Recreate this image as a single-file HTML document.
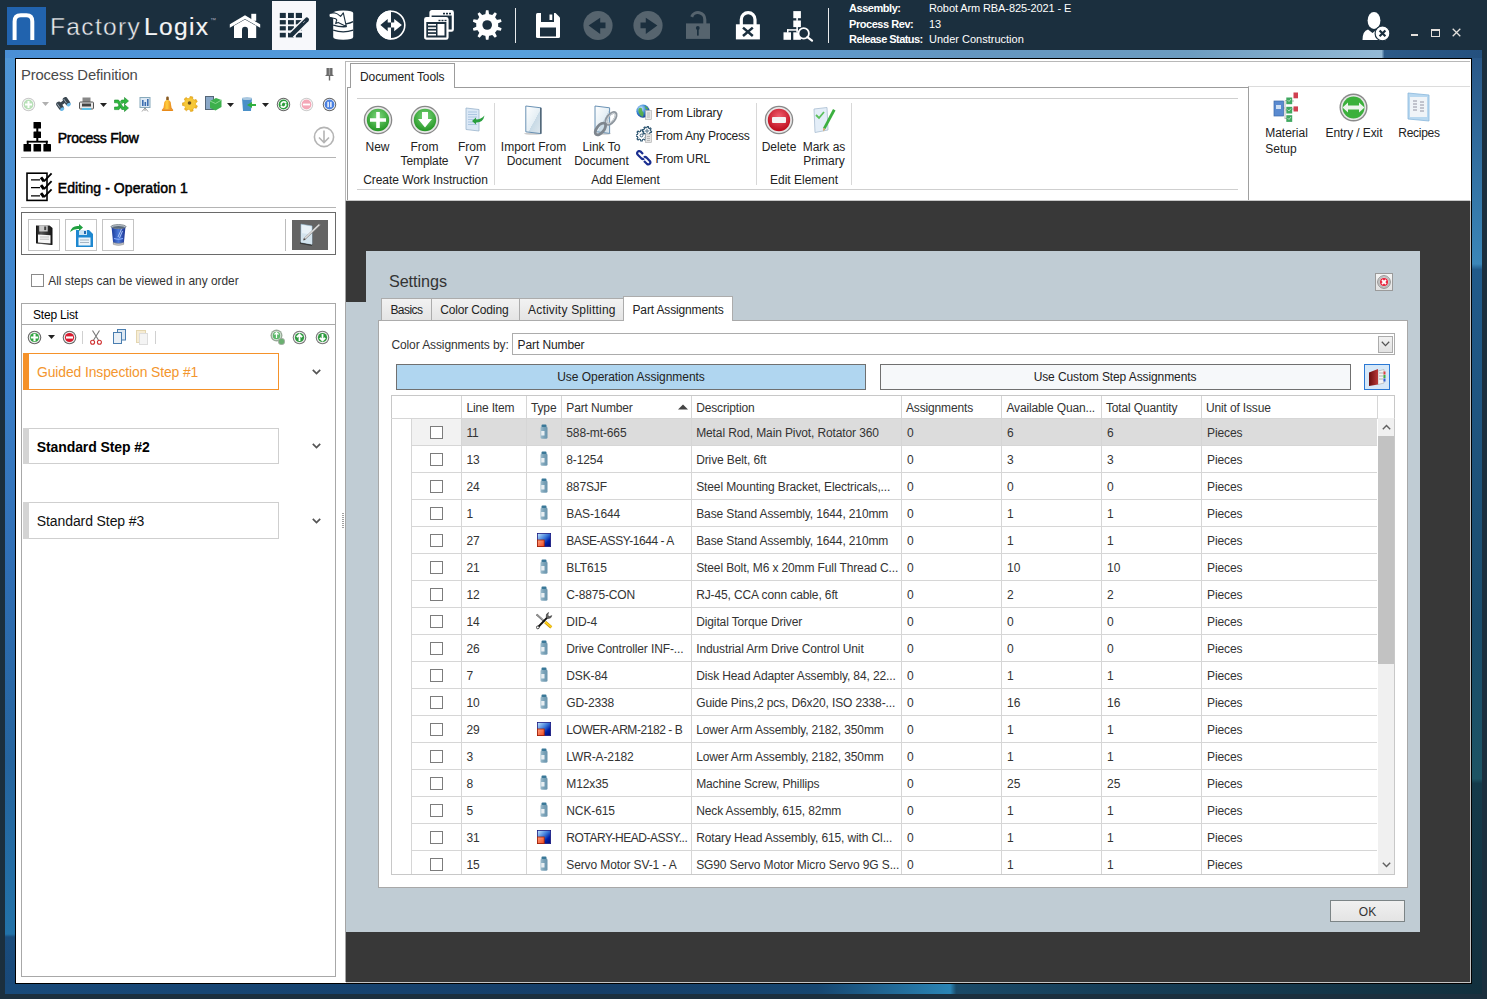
<!DOCTYPE html>
<html><head><meta charset="utf-8">
<style>
*{margin:0;padding:0;box-sizing:border-box}
html,body{width:1487px;height:999px;overflow:hidden;background:#1b2f3e;font-family:"Liberation Sans",sans-serif;font-size:12px;color:#222}
.a{position:absolute;display:block}
.t{position:absolute;white-space:nowrap;line-height:1}
</style></head><body>

<div class="a" style="left:5px;top:50px;width:1477px;height:8px;background:linear-gradient(90deg,#4a8fd6 0%,#58a0dc 35%,#5c9ad0 50%,#6496c0 65%,#6c9cc0 80%,#94bad6 93.2%,#2c5a88 93.4%,#24507e 100%)"></div>
<div class="a" style="left:5px;top:58px;width:10px;height:936px;background:linear-gradient(180deg,#4f96d6 0%,#3c82cc 30%,#2f6eb4 55%,#25649e 75%,#2272a8 93.6%,#1a4c7c 93.9%,#184878 100%)"></div>
<div class="a" style="left:1472px;top:58px;width:10px;height:936px;background:linear-gradient(180deg,#2a5888 0%,#3a86b8 22%,#205a8a 22.6%,#1f5580 38%,#1a4c6c 60%,#1c5464 77%,#143a4a 77.5%,#12303e 100%)"></div>
<div class="a" style="left:5px;top:984px;width:1477px;height:10px;background:linear-gradient(90deg,#184a7a 0%,#153e68 40%,#164670 55%,#2a84b4 64.0%,#1a4a68 64.4%,#163e58 75%,#12303e 100%)"></div>
<div class="a" style="left:15px;top:58px;width:1457px;height:926px;border:1px solid #000;background:#fff"></div>
<div class="a" style="left:7px;top:7px;width:39px;height:38px;background:#2163ae"></div>
<svg class="a" style="left:7px;top:7px" width="39" height="38" viewBox="0 0 39 38"><path d="M7.6 33 V14.5 Q7.6 8.3 13.8 8.3 H19.4 Q25.3 8.3 25.3 14.5 V33" fill="none" stroke="#fff" stroke-width="4"/></svg>
<div class="t" style="left:50px;top:15.00px;font-size:24.6px;font-weight:normal;color:#e8eaec;letter-spacing:1.3px;-webkit-text-stroke:0.4px #1b2f3e">Factory</div>
<div class="t" style="left:144px;top:15.00px;font-size:24.6px;font-weight:normal;color:#f4f5f6;letter-spacing:1.3px;-webkit-text-stroke:0.15px #f4f5f6">Logix</div>
<div class="t" style="left:210px;top:17.00px;font-size:6px;font-weight:normal;color:#aab;">&#8482;</div>
<div class="a" style="left:272px;top:1px;width:44px;height:49px;background:#f7f8fb"></div>
<svg class="a" style="left:229px;top:12px" width="32" height="28" viewBox="0 0 32 28"><rect x="22.3" y="1.8" width="4.9" height="7" fill="#fff"/><path d="M0.8 12.3 L16 3.3 L31.2 12.3 L31.2 15.8 L16 6.9 L0.8 15.8 Z" fill="#fff"/><path d="M5 13.8 L16 7.6 L27.2 13.8 V26 H19 V18 Q19 14.8 16 14.8 Q13 14.8 13 18 V26 H5 Z" fill="#fff"/></svg>
<svg class="a" style="left:279px;top:12px" width="31" height="27" viewBox="0 0 31 27"><g fill="#1b2f3e"><rect x="0.8" y="0.9" width="6" height="5.1"/><rect x="9" y="0.9" width="5.9" height="5.1"/><rect x="16.8" y="0.9" width="6.2" height="5.1"/><rect x="0.8" y="8.1" width="6" height="4.3"/><rect x="9" y="8.1" width="5.9" height="4.3"/><rect x="16.8" y="8.1" width="6.2" height="4.3"/><rect x="0.8" y="14.2" width="6" height="4.2"/><rect x="9" y="14.2" width="5.9" height="4.2"/><rect x="16.8" y="14.2" width="6.2" height="4.2"/><rect x="0.8" y="20.8" width="6" height="4.6"/><rect x="9" y="20.8" width="5.9" height="4.6"/><rect x="16.8" y="20.8" width="6.2" height="4.6"/></g><path d="M12.5 23 L27.5 8" stroke="#f7f8fb" stroke-width="7"/><path d="M13.2 22.3 L27.8 7.7" stroke="#1b2f3e" stroke-width="4.4" stroke-linecap="round"/><path d="M10.8 24.6 L11.6 20.5 L14.9 23.8 Z" fill="#1b2f3e"/><path d="M24.5 10.6 L25.6 9.5" stroke="#f7f8fb" stroke-width="0.9"/></svg>
<svg class="a" style="left:328px;top:10px" width="27" height="31" viewBox="0 0 27 31"><path d="M5.2 3 Q5.2 0.4 15.2 0.4 Q25.2 0.4 25.2 3 V27 Q25.2 29.8 15.2 29.8 Q5.2 29.8 5.2 27 Z" fill="#fff"/><path d="M5.2 20.2 Q15.2 23.6 25.2 20.2" stroke="#1b2f3e" stroke-width="1.3" fill="none"/><path d="M5.2 15.2 Q12 17.2 18.5 16.6 M18 13.8 Q22 13.2 25.2 11.6" stroke="#1b2f3e" stroke-width="1.3" fill="none"/><path d="M1.2 3.4 Q0.6 6.2 1.6 7.3 L7.6 8.8 Q9.5 9.8 8.3 11.2 L7.7 13.6 L10.2 12.4 L18.3 16.4 L15.3 2.9 L12.6 6.4 Q9.2 3.2 6.2 2.8 Z" fill="#fff" stroke="#1b2f3e" stroke-width="1.1" stroke-linejoin="round"/></svg>
<svg class="a" style="left:375px;top:9px" width="32" height="32" viewBox="0 0 32 32"><circle cx="16" cy="16.1" r="13.8" fill="none" stroke="#fff" stroke-width="1.6"/><path d="M16 1.6 A14.5 14.5 0 0 0 16 30.6 Z" fill="#fff"/><path d="M5.4 16.1 L12.7 9.9 V13.6 H16 V18.6 H12.7 V22.3 Z" fill="#1b2f3e"/><path d="M26.9 16.1 L19.2 9.9 V13.6 H16 V18.6 H19.2 V22.3 Z" fill="#fff"/></svg>
<svg class="a" style="left:424px;top:10px" width="30" height="30" viewBox="0 0 30 30"><rect x="6.5" y="1.2" width="22.3" height="19.5" rx="1.3" fill="#1b2f3e" stroke="#fff" stroke-width="2.2"/><rect x="1.2" y="8" width="22.3" height="20.7" rx="1.3" fill="#1b2f3e" stroke="#fff" stroke-width="2.2"/><rect x="6.5" y="2" width="21.5" height="3.5" fill="#fff"/><rect x="1.8" y="9" width="21.5" height="3" fill="#fff"/><g fill="#1b2f3e"><rect x="19" y="2.8" width="2" height="1.6"/><rect x="22" y="2.8" width="2" height="1.6"/><rect x="25" y="2.8" width="2" height="1.6"/><rect x="14.5" y="9.8" width="2" height="1.4"/><rect x="17.5" y="9.8" width="2" height="1.4"/><rect x="20.5" y="9.8" width="2" height="1.4"/></g><g fill="#fff"><rect x="4" y="14" width="8" height="1.6"/><rect x="4" y="17.3" width="8" height="1.6"/><rect x="4" y="20.6" width="8" height="1.6"/><rect x="4" y="23.9" width="8" height="1.6"/><rect x="13.5" y="14" width="7" height="11.5"/></g></svg>
<svg class="a" style="left:473px;top:10px" width="29" height="30" viewBox="0 0 29 30"><polygon points="12.21,5.20 12.94,0.25 15.46,0.25 16.19,5.20 18.35,5.90 21.85,2.33 23.88,3.81 21.57,8.24 22.91,10.08 27.84,9.25 28.61,11.64 24.13,13.86 24.13,16.14 28.61,18.36 27.84,20.75 22.91,19.92 21.57,21.76 23.88,26.19 21.85,27.67 18.35,24.10 16.19,24.80 15.46,29.75 12.94,29.75 12.21,24.80 10.05,24.10 6.55,27.67 4.52,26.19 6.83,21.76 5.49,19.92 0.56,20.75 -0.21,18.36 4.27,16.14 4.27,13.86 -0.21,11.64 0.56,9.25 5.49,10.08 6.83,8.24 4.52,3.81 6.55,2.33 10.05,5.90" fill="#fff"/><circle cx="14.2" cy="15" r="11" fill="#fff"/><circle cx="14.2" cy="15" r="4.8" fill="#1b2f3e"/></svg>
<div class="a" style="left:515px;top:8px;width:1px;height:35px;background:#e8eaec"></div>
<svg class="a" style="left:535px;top:12px" width="26" height="27" viewBox="0 0 26 27"><path d="M1 2.5 Q1 1 2.5 1 H20.5 L25 5.5 V24.5 Q25 26 23.5 26 H2.5 Q1 26 1 24.5 Z" fill="#fff"/><rect x="6" y="1" width="13" height="9" fill="#1b2f3e"/><rect x="14.5" y="2.5" width="2.8" height="5.5" fill="#fff"/><rect x="5" y="15.5" width="16" height="9" fill="#1b2f3e"/></svg>
<svg class="a" style="left:583px;top:10px" width="30" height="31" viewBox="0 0 30 31"><circle cx="15" cy="15.5" r="14.6" fill="#56646e"/><path d="M5.6 15.4 L17.2 7.7 V12.6 H22.5 V18.2 H17.2 V23.9 Z" fill="#1b2f3e"/></svg>
<svg class="a" style="left:633px;top:10px" width="30" height="31" viewBox="0 0 30 31"><circle cx="15" cy="15.5" r="14.6" fill="#56646e"/><path d="M24.4 15.4 L12.8 7.7 V12.6 H7.5 V18.2 H12.8 V23.9 Z" fill="#1b2f3e"/></svg>
<svg class="a" style="left:685px;top:10px" width="26" height="30" viewBox="0 0 26 30"><path d="M6.7 6.8 A6.8 6.8 0 0 1 19.8 9.4 V14" fill="none" stroke="#56646e" stroke-width="3.1"/><rect x="1" y="13.4" width="24" height="15.5" fill="#56646e"/><circle cx="12.8" cy="18" r="1.9" fill="#1b2f3e"/><rect x="12" y="18.5" width="1.7" height="7.1" fill="#1b2f3e"/></svg>
<svg class="a" style="left:735px;top:10px" width="26" height="31" viewBox="0 0 26 31"><path d="M6.3 15 V9.55 A6.85 6.85 0 0 1 20 9.55 V15" fill="none" stroke="#fff" stroke-width="3.2"/><rect x="0.9" y="14.3" width="24" height="15.1" fill="#fff"/><path d="M8 17.6 L17.8 26 M17.8 17.6 L8 26" stroke="#1b2f3e" stroke-width="2.5"/></svg>
<svg class="a" style="left:782px;top:10px" width="32" height="32" viewBox="0 0 32 32"><g fill="#fff"><rect x="11.3" y="1.1" width="7.6" height="7.1"/><rect x="14.3" y="8" width="1.6" height="2.8"/><rect x="11.3" y="10.5" width="7.6" height="6.6"/><rect x="14.3" y="17" width="1.6" height="5.5"/><rect x="5" y="19.2" width="10.9" height="1.5"/><rect x="5" y="19.2" width="1.5" height="3.5"/><rect x="1.5" y="22.3" width="7.5" height="7.5"/><rect x="11.3" y="22.3" width="7.6" height="7.5"/></g><circle cx="21.7" cy="23.4" r="5.2" fill="#1b2f3e" stroke="#fff" stroke-width="1.8"/><path d="M25.4 27.2 L30 30.6" stroke="#fff" stroke-width="2.2" stroke-linecap="round"/></svg>
<div class="a" style="left:828px;top:8px;width:1px;height:35px;background:#e8eaec"></div>
<div class="t" style="left:849px;top:3.00px;font-size:11px;font-weight:bold;color:#fff;letter-spacing:-0.45px">Assembly:</div>
<div class="t" style="left:849px;top:19.00px;font-size:11px;font-weight:bold;color:#fff;letter-spacing:-0.45px">Process Rev:</div>
<div class="t" style="left:849px;top:34.00px;font-size:11px;font-weight:bold;color:#fff;letter-spacing:-0.55px">Release Status:</div>
<div class="t" style="left:929px;top:3.00px;font-size:11px;font-weight:normal;color:#fff;letter-spacing:-0.1px">Robot Arm RBA-825-2021 - E</div>
<div class="t" style="left:929px;top:19.00px;font-size:11px;font-weight:normal;color:#fff;">13</div>
<div class="t" style="left:929px;top:34.00px;font-size:11px;font-weight:normal;color:#fff;">Under Construction</div>
<svg class="a" style="left:1362px;top:12px" width="29" height="30" viewBox="0 0 29 30"><ellipse cx="12" cy="8.6" rx="6.4" ry="8.5" fill="#fff"/><path d="M0.5 28 Q0.5 19 6 17.5 L10.5 21 L15 17.5 Q19 18.5 20 21 V28 Z" fill="#fff"/><circle cx="20.5" cy="21.4" r="7.4" fill="#fff" stroke="#1b2f3e" stroke-width="1.2"/><path d="M17.6 18.5 L23.4 24.3 M23.4 18.5 L17.6 24.3" stroke="#1b2f3e" stroke-width="2.2"/></svg>
<div class="a" style="left:1411px;top:34px;width:7px;height:2px;background:#e4e0dc"></div>
<div class="a" style="left:1431px;top:29px;width:9px;height:8px;border:1px solid #e4e0dc;border-top-width:2px"></div>
<svg class="a" style="left:1452px;top:28px" width="9" height="9" viewBox="0 0 9 9"><path d="M0.7 0.7 L8.3 8.3 M8.3 0.7 L0.7 8.3" stroke="#e4e0dc" stroke-width="1.3"/></svg>
<div class="t" style="left:21px;top:68.00px;font-size:14.8px;font-weight:normal;color:#4a4a4a;letter-spacing:-0.15px">Process Definition</div>
<svg class="a" style="left:324px;top:67px" width="11" height="14" viewBox="0 0 11 14"><path d="M2.5 1 H8.5 V7.5 L10 9 H1 L2.5 7.5 Z" fill="#6a6a6a"/><rect x="4.8" y="1" width="1.4" height="7" fill="#9a9a9a"/><rect x="4.8" y="9" width="1.4" height="4.5" fill="#6a6a6a"/></svg>
<svg class="a" style="left:21px;top:97px" width="15" height="15" viewBox="0 0 15 15"><circle cx="7.5" cy="7.5" r="6.7" fill="#c8c8c8"/><circle cx="7.5" cy="7.5" r="5.7" fill="#fff"/><circle cx="7.5" cy="7.5" r="4.9" fill="#b8e0b8"/><path d="M7.5 4 V11 M4 7.5 H11" stroke="#fff" stroke-width="2"/></svg>
<svg class="a" style="left:42px;top:102px" width="7" height="4" viewBox="0 0 7 4"><path d="M0 0 H7 L3.5 4 Z" fill="#b0b0b0"/></svg>
<svg class="a" style="left:56px;top:97px" width="15" height="14" viewBox="0 0 15 14"><g transform="rotate(-35 7.5 7)"><rect x="1" y="2" width="5" height="9" rx="2.2" fill="#3a4650"/><rect x="9" y="2" width="5" height="9" rx="2.2" fill="#3a4650"/><rect x="5" y="4" width="5" height="3" fill="#3a4650"/><ellipse cx="3.5" cy="10.5" rx="2.2" ry="1.6" fill="#6ab8e8"/><ellipse cx="11.5" cy="10.5" rx="2.2" ry="1.6" fill="#6ab8e8"/><path d="M2.5 3 V8 M10.5 3 V8" stroke="#a8b8c4" stroke-width="0.8"/></g></svg>
<svg class="a" style="left:79px;top:97px" width="15" height="14" viewBox="0 0 15 14"><rect x="3.5" y="0.5" width="8" height="5" fill="#888"/><rect x="0.5" y="5" width="14" height="7" rx="1" fill="#e8e8e8" stroke="#555"/><rect x="3" y="6.5" width="9" height="3" fill="#444"/><rect x="3" y="11" width="9" height="2" fill="#5ac0e8"/></svg>
<svg class="a" style="left:100px;top:103px" width="7" height="4" viewBox="0 0 7 4"><path d="M0 0 H7 L3.5 4 Z" fill="#222"/></svg>
<svg class="a" style="left:114px;top:97px" width="15" height="15" viewBox="0 0 15 15"><path d="M0.5 3 H4.5 L9 10 H10.5 V7.5 L14.5 11 L10.5 14.5 V12.5 H7.8 L3.5 5.8 H0.5 Z" fill="#2eb83e" stroke="#1a8a2a" stroke-width="0.6"/><path d="M0.5 10 H3.6 L5 8.2 L6.6 10.4 L5 12.6 H0.5 Z M10.5 0.5 L14.5 4 L10.5 7.5 V5.7 H8.8 L8 6.8 L6.4 4.6 L7.6 3 H10.5 Z" fill="#2eb83e" stroke="#1a8a2a" stroke-width="0.6"/></svg>
<svg class="a" style="left:139px;top:97px" width="12" height="15" viewBox="0 0 12 15"><rect x="1" y="0.5" width="10" height="10" fill="#dce8f4" stroke="#8ab"/><rect x="3" y="3" width="1.6" height="6" fill="#3c6eb0"/><rect x="5.5" y="5" width="1.6" height="4" fill="#3c6eb0"/><rect x="8" y="2" width="1.6" height="7" fill="#3c6eb0"/><path d="M6 10.5 V14 M6 11 L3 14.5 M6 11 L9 14.5" stroke="#888" stroke-width="0.8"/></svg>
<svg class="a" style="left:161px;top:96px" width="13" height="16" viewBox="0 0 13 16"><defs><linearGradient id="bellg" x1="0" x2="1"><stop offset="0" stop-color="#f08010"/><stop offset="0.45" stop-color="#ffd040"/><stop offset="1" stop-color="#e07010"/></linearGradient></defs><rect x="5.2" y="0.5" width="2.6" height="4" rx="1.2" fill="#8a5a20"/><path d="M6.5 4 Q3 4 3 8.5 Q3 12 1 13.5 H12 Q10 12 10 8.5 Q10 4 6.5 4 Z" fill="url(#bellg)"/><rect x="0.8" y="13.2" width="11.4" height="1.8" rx="0.8" fill="#e88a18"/></svg>
<svg class="a" style="left:182px;top:96px" width="16" height="16" viewBox="0 0 16 16"><polygon points="7.44,2.43 8.23,0.40 10.75,0.91 10.68,3.09 12.01,4.09 14.08,3.44 15.25,5.73 13.52,7.03 13.56,8.69 15.36,9.91 14.30,12.26 12.19,11.71 10.92,12.78 11.09,14.94 8.60,15.58 7.71,13.59 6.09,13.26 4.50,14.75 2.45,13.19 3.45,11.26 2.69,9.78 0.54,9.47 0.48,6.90 2.61,6.48 3.30,4.96 2.20,3.09 4.17,1.43 5.83,2.84" fill="#f2b828" stroke="#d89a10" stroke-width="0.6" stroke-linejoin="round"/><circle cx="8" cy="8" r="5.8" fill="#f6c83a"/><circle cx="7.5" cy="7" r="1.8" fill="#6a5020"/></svg>
<svg class="a" style="left:205px;top:96px" width="17" height="16" viewBox="0 0 17 16"><rect x="0.5" y="0.5" width="8" height="13" fill="#8aa8c8" stroke="#567"/><path d="M5 5 L11 2 L16.5 4 V11 L10.5 14.5 L5 12 Z" fill="#3cb04c"/><path d="M5 5 L10.5 7.5 L16.5 4" fill="none" stroke="#9be0a0" stroke-width="0.8"/></svg>
<svg class="a" style="left:227px;top:103px" width="7" height="4" viewBox="0 0 7 4"><path d="M0 0 H7 L3.5 4 Z" fill="#222"/></svg>
<svg class="a" style="left:241px;top:96px" width="16" height="16" viewBox="0 0 16 16"><path d="M1 2 H11 L10 15 H2 Z" fill="#4a90c8"/><ellipse cx="6" cy="2.5" rx="5" ry="1.5" fill="#aac8e0"/><path d="M6 9 L11 6 V8 H15 V10 H11 V12 Z" fill="#30b040"/></svg>
<svg class="a" style="left:262px;top:103px" width="7" height="4" viewBox="0 0 7 4"><path d="M0 0 H7 L3.5 4 Z" fill="#222"/></svg>
<svg class="a" style="left:276px;top:97px" width="15" height="15" viewBox="0 0 15 15"><circle cx="7.5" cy="7.5" r="6.7" fill="#666"/><circle cx="7.5" cy="7.5" r="5.7" fill="#fff"/><circle cx="7.5" cy="7.5" r="4.9" fill="#2e9e3e"/><path d="M5.2 8.2 A2.6 2.6 0 0 1 9.5 5.6" stroke="#fff" stroke-width="1.5" fill="none"/><path d="M9.8 6.8 A2.6 2.6 0 0 1 5.5 9.4" stroke="#fff" stroke-width="1.5" fill="none"/><path d="M8.5 4 L10.8 5.2 L9 7 Z M6.5 11 L4.2 9.8 L6 8 Z" fill="#fff"/></svg>
<svg class="a" style="left:299px;top:97px" width="15" height="15" viewBox="0 0 15 15"><circle cx="7.5" cy="7.5" r="6.7" fill="#ccc"/><circle cx="7.5" cy="7.5" r="5.7" fill="#fff"/><circle cx="7.5" cy="7.5" r="4.9" fill="#f4a8b8"/><rect x="4" y="6.6" width="7" height="1.8" fill="#fff"/></svg>
<svg class="a" style="left:322px;top:97px" width="15" height="15" viewBox="0 0 15 15"><circle cx="7.5" cy="7.5" r="6.7" fill="#666"/><circle cx="7.5" cy="7.5" r="5.7" fill="#fff"/><circle cx="7.5" cy="7.5" r="4.9" fill="#4a80e0"/><rect x="5.4" y="4.8" width="1.4" height="5.4" fill="#fff"/><rect x="8.2" y="4.8" width="1.4" height="5.4" fill="#fff"/></svg>
<svg class="a" style="left:23px;top:122px" width="28" height="30" viewBox="0 0 28 30"><g fill="#000"><rect x="10.5" y="0" width="7.5" height="6.5" rx="0.6"/><rect x="10.5" y="9.5" width="7.5" height="6.5" rx="0.6"/><rect x="13.3" y="6" width="2" height="4"/><rect x="13.3" y="15.5" width="2" height="4"/><rect x="3.8" y="18.8" width="21" height="1.8"/><rect x="3.8" y="18.8" width="1.8" height="4"/><rect x="22.8" y="18.8" width="1.8" height="4"/><rect x="0.5" y="22" width="7.6" height="7.5" rx="0.6"/><rect x="10.5" y="22" width="7.6" height="7.5" rx="0.6"/><rect x="20.4" y="22" width="7.6" height="7.5" rx="0.6"/></g></svg>
<div class="t" style="left:57.7px;top:131.00px;font-size:14px;font-weight:normal;color:#000;letter-spacing:-0.25px;-webkit-text-stroke:0.5px #000">Process Flow</div>
<svg class="a" style="left:313px;top:126px" width="22" height="22" viewBox="0 0 22 22"><circle cx="11" cy="11" r="9.6" fill="none" stroke="#b4b4b4" stroke-width="1.6"/><path d="M11 4.5 V16.5 M6 11.5 L11 16.5 L16 11.5" fill="none" stroke="#b4b4b4" stroke-width="1.6"/></svg>
<div class="a" style="left:21px;top:157px;width:315px;height:1px;background:#b4b4b4"></div>
<svg class="a" style="left:25px;top:171px" width="28" height="31" viewBox="0 0 28 31"><rect x="2" y="2.2" width="20" height="27.2" fill="none" stroke="#000" stroke-width="1.6"/><g stroke="#000" stroke-width="1.3" fill="none"><path d="M6 8.8 H15 M6 16.6 H15 M6 24.8 H15"/></g><g fill="none" stroke="#000" stroke-linejoin="miter"><path d="M16 6.3 L19 10.3" stroke-width="3"/><path d="M19 10.3 L26.6 2.4" stroke-width="1.8"/><path d="M16 14.1 L19 18.1" stroke-width="3"/><path d="M19 18.1 L26.6 10.2" stroke-width="1.8"/><path d="M16 22.2 L19 26.2" stroke-width="3"/><path d="M19 26.2 L26.6 18.3" stroke-width="1.8"/></g></svg>
<div class="t" style="left:57.8px;top:181.00px;font-size:14px;font-weight:normal;color:#000;letter-spacing:0.08px;-webkit-text-stroke:0.5px #000">Editing - Operation 1</div>
<div class="a" style="left:21px;top:207px;width:315px;height:1px;background:#b4b4b4"></div>
<div class="a" style="left:21px;top:212px;width:315px;height:43px;border:1px solid #6a6a6a;background:#fff"></div>
<div class="a" style="left:28px;top:219px;width:32px;height:32px;border:1px solid #c4c4c4"></div>
<div class="a" style="left:65px;top:219px;width:32px;height:32px;border:1px solid #c4c4c4"></div>
<div class="a" style="left:102px;top:219px;width:32px;height:32px;border:1px solid #c4c4c4"></div>
<svg class="a" style="left:35px;top:224px" width="19" height="22" viewBox="0 0 19 22"><defs><linearGradient id="flb" x1="0" x2="1"><stop offset="0" stop-color="#111"/><stop offset="0.3" stop-color="#555"/><stop offset="1" stop-color="#111"/></linearGradient></defs><path d="M1 1.5 H14.5 L17.5 4 V20.5 Q17.5 21.3 16.5 21 L1.5 19.5 Q1 19.4 1 18.8 Z" fill="url(#flb)"/><rect x="4.2" y="1.5" width="8.5" height="6" fill="#c8c8c8"/><rect x="9.2" y="2.5" width="2" height="3.6" fill="#444"/><path d="M3 10.5 L15.5 11.2 V19.5 L3 18.5 Z" fill="#f6f6f6"/><path d="M5 13 H14 M5 15.2 H14" stroke="#999" stroke-width="0.6"/></svg>
<svg class="a" style="left:69px;top:224px" width="25" height="24" viewBox="0 0 25 24"><path d="M7 6 H20 L24 10 V23 H7 Z" fill="#1e88d0"/><rect x="10" y="6" width="8" height="5" fill="#cce4f4"/><rect x="15" y="7" width="2" height="3" fill="#1e68b0"/><rect x="9.5" y="13.5" width="12" height="8" fill="#eaf4fb"/><path d="M11 16 H20 M11 18.5 H20" stroke="#89a" stroke-width="0.7"/><path d="M1 8 Q3 1 10 2 V0 L14 3.5 L10 7 V5 Q5 4.5 1 8 Z" fill="#20a040"/></svg>
<svg class="a" style="left:110px;top:224px" width="17" height="22" viewBox="0 0 17 22"><defs><linearGradient id="binb" x1="0" x2="1"><stop offset="0" stop-color="#1a3a9a"/><stop offset="0.5" stop-color="#4a78d8"/><stop offset="1" stop-color="#1a3090"/></linearGradient></defs><path d="M1.5 2.5 L15.5 2.5 L13.8 19.5 Q8.5 21.5 3.2 19.5 Z" fill="url(#binb)"/><ellipse cx="8.5" cy="2.6" rx="7.5" ry="2" fill="#b8c0c8" stroke="#707880" stroke-width="0.8"/><ellipse cx="8.5" cy="3.2" rx="6" ry="1.1" fill="#5a6a7a"/><path d="M8 13 L11.5 5 M9.5 14 L12.5 7" stroke="#c8dcff" stroke-width="0.8"/><path d="M4 14.5 Q8.5 16 13 14.5" stroke="#8ab0ff" stroke-width="1.2" fill="none"/><path d="M3.2 18.5 Q8.5 20.5 13.8 18.5 L13.6 20.5 Q8.5 22.3 3.4 20.5 Z" fill="#c8c8c8" stroke="#888" stroke-width="0.5"/></svg>
<div class="a" style="left:285px;top:219px;width:1px;height:32px;background:#bcbcbc"></div>
<div class="a" style="left:292px;top:220px;width:36px;height:30px;background:#646464"></div>
<svg class="a" style="left:298px;top:222px" width="26" height="26" viewBox="0 0 26 26"><path d="M2 21 L14 23.2" stroke="#3a3a3a" stroke-width="1.6"/><path d="M3 2.2 L14 4 V22.2 L3 20.2 Z" fill="#e8f2f8" stroke="#9ec4dc" stroke-width="0.6"/><path d="M3 11 L14 12.5 V22.2 L3 20.2 Z" fill="#d4e4ee"/><path d="M6.2 17.2 L21.4 2.8" stroke="#888" stroke-width="2.2" stroke-linecap="round"/><path d="M6.2 17 L21.2 2.8" stroke="#e0e0e0" stroke-width="1.2"/><path d="M5.2 18.4 L6.8 16 L7.5 17.3 Z" fill="#333"/></svg>
<div class="a" style="left:31px;top:274px;width:13px;height:13px;border:1px solid #8a8a8a;background:#fff"></div>
<div class="t" style="left:48.3px;top:276.00px;font-size:11.9px;font-weight:normal;color:#333;">All steps can be viewed in any order</div>
<div class="a" style="left:21px;top:303px;width:315px;height:674px;border:1px solid #a8a8a8;background:#fff"></div>
<div class="a" style="left:22px;top:324px;width:313px;height:1px;background:#a8a8a8"></div>
<div class="t" style="left:33px;top:309.00px;font-size:12px;font-weight:normal;color:#000;letter-spacing:-0.2px">Step List</div>
<svg class="a" style="left:27px;top:330px" width="15" height="15" viewBox="0 0 15 15"><circle cx="7.5" cy="7.5" r="6.8" fill="#666"/><circle cx="7.5" cy="7.5" r="5.7" fill="#eee"/><circle cx="7.5" cy="7.5" r="4.6" fill="#2fa43f"/><path d="M7.5 3.8 V11.2 M3.8 7.5 H11.2" stroke="#fff" stroke-width="2.2"/></svg>
<svg class="a" style="left:48px;top:335px" width="7" height="4" viewBox="0 0 7 4"><path d="M0 0 H7 L3.5 4 Z" fill="#222"/></svg>
<svg class="a" style="left:62px;top:330px" width="15" height="15" viewBox="0 0 15 15"><circle cx="7.5" cy="7.5" r="6.8" fill="#666"/><circle cx="7.5" cy="7.5" r="5.7" fill="#eee"/><circle cx="7.5" cy="7.5" r="4.6" fill="#d81a2e"/><rect x="4" y="6.4" width="7" height="2.2" fill="#fff"/></svg>
<div class="a" style="left:82px;top:331px;width:1px;height:13px;background:#d0d0d0"></div>
<svg class="a" style="left:90px;top:330px" width="12" height="15" viewBox="0 0 12 15"><path d="M2.5 0.5 L9 11 M9.5 0.5 L3 11" stroke="#777" stroke-width="1.1"/><circle cx="2.6" cy="12.3" r="2" fill="none" stroke="#d03030" stroke-width="1.1"/><circle cx="9.4" cy="12.3" r="2" fill="none" stroke="#d03030" stroke-width="1.1"/></svg>
<svg class="a" style="left:113px;top:329px" width="13" height="15" viewBox="0 0 13 15"><rect x="4.5" y="0.5" width="8" height="10.5" fill="#dde8f2" stroke="#4a7eb0"/><rect x="0.5" y="3.5" width="8" height="11" fill="#eaf0f6" stroke="#4a7eb0"/></svg>
<svg class="a" style="left:136px;top:329px" width="12" height="16" viewBox="0 0 12 16"><rect x="0.5" y="1.5" width="9" height="12" fill="#f6ecd4" stroke="#e4d6b0"/><rect x="3.5" y="4.5" width="8" height="11" fill="#f4f4f4" stroke="#ddd"/></svg>
<div class="a" style="left:155px;top:331px;width:1px;height:13px;background:#d0d0d0"></div>
<svg class="a" style="left:270px;top:329px" width="15" height="16" viewBox="0 0 15 16"><circle cx="6.5" cy="6.5" r="6" fill="#9a9"/><circle cx="6.5" cy="6.5" r="4.6" fill="#e6eee6"/><circle cx="6.5" cy="6.5" r="3.8" fill="#5cb86a"/><path d="M6.5 3.5 V9 M4.5 5.5 L6.5 3.5 L8.5 5.5" stroke="#fff" stroke-width="1.2" fill="none"/><circle cx="11.5" cy="12.5" r="3.2" fill="#6ab070" stroke="#aaa" stroke-width="0.8"/></svg>
<svg class="a" style="left:292px;top:330px" width="15" height="15" viewBox="0 0 15 15"><circle cx="7.5" cy="7.5" r="6.8" fill="#777"/><circle cx="7.5" cy="7.5" r="5.7" fill="#eee"/><circle cx="7.5" cy="7.5" r="4.6" fill="#2e9a3e"/><path d="M7.5 11 V4.5 M4.8 7.2 L7.5 4.5 L10.2 7.2" stroke="#fff" stroke-width="1.8" fill="none"/></svg>
<svg class="a" style="left:315px;top:330px" width="15" height="15" viewBox="0 0 15 15"><circle cx="7.5" cy="7.5" r="6.8" fill="#777"/><circle cx="7.5" cy="7.5" r="5.7" fill="#eee"/><circle cx="7.5" cy="7.5" r="4.6" fill="#2e9a3e"/><path d="M7.5 4 V10.5 M4.8 7.8 L7.5 10.5 L10.2 7.8" stroke="#fff" stroke-width="1.8" fill="none"/></svg>
<div class="a" style="left:23px;top:353px;width:256px;height:37px;border:1px solid #f5922a;background:#fff"></div>
<div class="a" style="left:23px;top:353px;width:6px;height:37px;background:#f5922a"></div>
<div class="t" style="left:37px;top:366.00px;font-size:13.9px;font-weight:normal;color:#f3962e;letter-spacing:-0.1px">Guided Inspection Step #1</div>
<svg class="a" style="left:312px;top:369px" width="9" height="6" viewBox="0 0 9 6"><path d="M0.8 0.8 L4.5 4.6 L8.2 0.8" fill="none" stroke="#555" stroke-width="1.7"/></svg>
<div class="a" style="left:23px;top:428px;width:256px;height:36px;border:1px solid #cfcfcf;background:#fff"></div>
<div class="a" style="left:23px;top:428px;width:6px;height:36px;background:#d4d4d4"></div>
<div class="t" style="left:36.8px;top:440.00px;font-size:14px;font-weight:bold;color:#000;letter-spacing:-0.1px">Standard Step #2</div>
<svg class="a" style="left:312px;top:443px" width="9" height="6" viewBox="0 0 9 6"><path d="M0.8 0.8 L4.5 4.6 L8.2 0.8" fill="none" stroke="#555" stroke-width="1.7"/></svg>
<div class="a" style="left:23px;top:502px;width:256px;height:37px;border:1px solid #cfcfcf;background:#fff"></div>
<div class="a" style="left:23px;top:502px;width:6px;height:37px;background:#d4d4d4"></div>
<div class="t" style="left:36.8px;top:514.00px;font-size:14px;font-weight:normal;color:#111;letter-spacing:-0.1px">Standard Step #3</div>
<svg class="a" style="left:312px;top:518px" width="9" height="6" viewBox="0 0 9 6"><path d="M0.8 0.8 L4.5 4.6 L8.2 0.8" fill="none" stroke="#555" stroke-width="1.7"/></svg>
<div class="a" style="left:345px;top:61px;width:1px;height:921px;background:#a4a4a4"></div>
<div class="a" style="left:342px;top:513px;width:2px;height:1px;background:#a0a0a0"></div>
<div class="a" style="left:342px;top:515px;width:2px;height:1px;background:#a0a0a0"></div>
<div class="a" style="left:342px;top:517px;width:2px;height:1px;background:#a0a0a0"></div>
<div class="a" style="left:342px;top:519px;width:2px;height:1px;background:#a0a0a0"></div>
<div class="a" style="left:342px;top:521px;width:2px;height:1px;background:#a0a0a0"></div>
<div class="a" style="left:342px;top:523px;width:2px;height:1px;background:#a0a0a0"></div>
<div class="a" style="left:342px;top:525px;width:2px;height:1px;background:#a0a0a0"></div>
<div class="a" style="left:342px;top:527px;width:2px;height:1px;background:#a0a0a0"></div>
<div class="a" style="left:346px;top:59px;width:1124px;height:142px;background:#fff"></div>
<div class="a" style="left:345px;top:61px;width:1125px;height:1px;background:#b8b8b8"></div>
<div class="a" style="left:345px;top:61px;width:1px;height:140px;background:#b8b8b8"></div>
<div class="a" style="left:347px;top:87px;width:1px;height:114px;background:#9c9c9c"></div>
<div class="a" style="left:350px;top:63px;width:105px;height:25px;border:1px solid #9c9c9c;border-bottom:none;background:#fff"></div>
<div class="a" style="left:347px;top:87px;width:3px;height:1px;background:#9c9c9c"></div>
<div class="a" style="left:455px;top:87px;width:794px;height:1px;background:#9c9c9c"></div>
<div class="t" style="left:360px;top:71.00px;font-size:12px;font-weight:normal;color:#222;letter-spacing:-0.1px">Document Tools</div>
<div class="a" style="left:357px;top:98px;width:881px;height:1px;background:#cfcfcf"></div>
<div class="a" style="left:357px;top:189px;width:881px;height:1px;background:#cfcfcf"></div>
<div class="a" style="left:494px;top:103px;width:1px;height:82px;background:#d8d8d8"></div>
<div class="a" style="left:756px;top:103px;width:1px;height:82px;background:#d8d8d8"></div>
<div class="a" style="left:851px;top:103px;width:1px;height:82px;background:#d8d8d8"></div>
<svg class="a" style="left:363px;top:105px" width="30" height="30" viewBox="0 0 30 30"><defs><radialGradient id="g363" cx="0.5" cy="0.35" r="0.6"><stop offset="0" stop-color="#7ed87e"/><stop offset="1" stop-color="#2a9a2a"/></radialGradient></defs><circle cx="15" cy="15" r="14.3" fill="#888"/><circle cx="15" cy="15" r="13" fill="#e8e8e8"/><circle cx="15" cy="15" r="11.2" fill="url(#g363)"/><path d="M15 7 V23 M7 15 H23" stroke="#fff" stroke-width="3.6"/></svg>
<svg class="a" style="left:410px;top:105px" width="30" height="30" viewBox="0 0 30 30"><defs><radialGradient id="g410" cx="0.5" cy="0.35" r="0.6"><stop offset="0" stop-color="#7ed87e"/><stop offset="1" stop-color="#2a9a2a"/></radialGradient></defs><circle cx="15" cy="15" r="14.3" fill="#888"/><circle cx="15" cy="15" r="13" fill="#e8e8e8"/><circle cx="15" cy="15" r="11.2" fill="url(#g410)"/><path d="M12 7 H18 V14 H22 L15 22.5 L8 14 H12 Z" fill="#fff"/></svg>
<svg class="a" style="left:464px;top:107px" width="21" height="25" viewBox="0 0 21 25"><path d="M2 1 L15 2.5 V24 L2 22.5 Z" fill="#dbe8f6" stroke="#9bb4cc" stroke-width="0.8"/><path d="M4 5 H13 M4 7.5 H13 M4 10 H13 M4 12.5 H13 M4 15 H13 M4 17.5 H13" stroke="#9ab8d8" stroke-width="0.7"/><path d="M8 14 L12 10.5 V12.5 Q17 12.5 20.5 8.5 Q19 16 12 15.5 V17.5 Z" fill="#2aa040"/></svg>
<div class="t" style="left:227.5px;width:300px;text-align:center;top:141.00px;font-size:12px;font-weight:normal;color:#222;">New</div>
<div class="t" style="left:274.5px;width:300px;text-align:center;top:141.00px;font-size:12px;font-weight:normal;color:#222;">From</div>
<div class="t" style="left:274.5px;width:300px;text-align:center;top:155.00px;font-size:12px;font-weight:normal;color:#222;letter-spacing:-0.1px">Template</div>
<div class="t" style="left:322px;width:300px;text-align:center;top:141.00px;font-size:12px;font-weight:normal;color:#222;">From</div>
<div class="t" style="left:322px;width:300px;text-align:center;top:155.00px;font-size:12px;font-weight:normal;color:#222;">V7</div>
<div class="t" style="left:275.5px;width:300px;text-align:center;top:174.00px;font-size:12px;font-weight:normal;color:#222;letter-spacing:-0.05px">Create Work Instruction</div>
<svg class="a" style="left:523px;top:105px" width="22" height="31" viewBox="0 0 22 31"><defs><linearGradient id="docg" x1="0" y1="0" x2="1" y2="1"><stop offset="0" stop-color="#ffffff"/><stop offset="0.55" stop-color="#e4eef4"/><stop offset="0.56" stop-color="#c8dae6"/><stop offset="1" stop-color="#dfe8ee"/></linearGradient></defs><ellipse cx="10" cy="28.6" rx="9" ry="1.2" fill="#999" opacity="0.5"/><path d="M2.8 1 L17.9 2.8 V28.6 L2.8 26.8 Z" fill="url(#docg)" stroke="#5a86ac" stroke-width="0.9"/><path d="M17.9 2.8 V28.6" stroke="#2a3a48" stroke-width="1"/></svg>
<svg class="a" style="left:593px;top:105px" width="26" height="32" viewBox="0 0 26 32"><ellipse cx="10" cy="28.6" rx="8" ry="1.2" fill="#999" opacity="0.5"/><path d="M2 1 L16.6 2.8 V28.4 L2 26.6 Z" fill="url(#docg)" stroke="#5a86ac" stroke-width="0.9"/><g fill="none" stroke-width="2.8"><ellipse cx="18" cy="13.4" rx="7" ry="3.6" transform="rotate(-52 18 13.4)" stroke="#8e969e"/><ellipse cx="7.4" cy="24" rx="7" ry="3.6" transform="rotate(-52 7.4 24)" stroke="#7e868e"/></g><g fill="none" stroke-width="0.9" stroke="#d8dde2"><ellipse cx="18" cy="13.4" rx="6.2" ry="2.8" transform="rotate(-52 18 13.4)"/></g></svg>
<div class="t" style="left:383.5px;width:300px;text-align:center;top:141.00px;font-size:12px;font-weight:normal;color:#222;">Import From</div>
<div class="t" style="left:384px;width:300px;text-align:center;top:155.00px;font-size:12px;font-weight:normal;color:#222;">Document</div>
<div class="t" style="left:451.5px;width:300px;text-align:center;top:141.00px;font-size:12px;font-weight:normal;color:#222;">Link To</div>
<div class="t" style="left:451.5px;width:300px;text-align:center;top:155.00px;font-size:12px;font-weight:normal;color:#222;">Document</div>
<svg class="a" style="left:636px;top:104px" width="16" height="16" viewBox="0 0 16 16"><defs><radialGradient id="glb" cx="0.35" cy="0.3" r="0.75"><stop offset="0" stop-color="#cfe8ff"/><stop offset="0.5" stop-color="#3a8ad8"/><stop offset="1" stop-color="#1a3a90"/></radialGradient></defs><circle cx="7" cy="7.2" r="6.6" fill="url(#glb)"/><path d="M2.5 5 Q4 3 6 4.5 Q5.5 7 7.5 8.5 Q8 11 6.5 13 Q3 11 2.5 8 Z M8.5 1.5 Q11 2.5 12.5 5 L10 5.5 Z" fill="#5ab040" opacity="0.9"/><rect x="9.6" y="6.5" width="5.8" height="9" fill="#e8e8e8" stroke="#aaa" stroke-width="0.6"/><path d="M11 9 H14 M11 11 H14 M11 13 H14" stroke="#999" stroke-width="0.6"/></svg>
<div class="t" style="left:655.5px;top:107.00px;font-size:12px;font-weight:normal;color:#222;letter-spacing:-0.1px">From Library</div>
<svg class="a" style="left:636px;top:126px" width="17" height="17" viewBox="0 0 17 17"><polygon points="4.50,5.42 4.77,3.95 6.23,3.95 6.50,5.42 7.68,5.91 8.91,5.06 9.94,6.09 9.09,7.32 9.58,8.50 11.05,8.77 11.05,10.23 9.58,10.50 9.09,11.68 9.94,12.91 8.91,13.94 7.68,13.09 6.50,13.58 6.23,15.05 4.77,15.05 4.50,13.58 3.32,13.09 2.09,13.94 1.06,12.91 1.91,11.68 1.42,10.50 -0.05,10.23 -0.05,8.77 1.42,8.50 1.91,7.32 1.06,6.09 2.09,5.06 3.32,5.91" fill="#fff" stroke="#2c5470" stroke-width="1.1"/><circle cx="5.5" cy="9.5" r="1.4" fill="none" stroke="#2c5470" stroke-width="0.9"/><polygon points="10.86,1.60 11.32,0.41 12.49,0.65 12.45,1.92 13.31,2.50 14.47,1.98 15.13,2.98 14.20,3.85 14.40,4.86 15.59,5.32 15.35,6.49 14.08,6.45 13.50,7.31 14.02,8.47 13.02,9.13 12.15,8.20 11.14,8.40 10.68,9.59 9.51,9.35 9.55,8.08 8.69,7.50 7.53,8.02 6.87,7.02 7.80,6.15 7.60,5.14 6.41,4.68 6.65,3.51 7.92,3.55 8.50,2.69 7.98,1.53 8.98,0.87 9.85,1.80" fill="#fff" stroke="#2c5470" stroke-width="1.1"/><circle cx="11" cy="5" r="1.2" fill="none" stroke="#2c5470" stroke-width="0.9"/><rect x="9.5" y="8" width="6" height="8.5" fill="#e4e4e4" stroke="#aaa" stroke-width="0.6"/><path d="M11 10.5 H14 M11 12.5 H14 M11 14.5 H14" stroke="#999" stroke-width="0.6"/></svg>
<div class="t" style="left:655.5px;top:130.00px;font-size:12px;font-weight:normal;color:#222;letter-spacing:-0.25px">From Any Process</div>
<svg class="a" style="left:636px;top:150px" width="16" height="16" viewBox="0 0 16 16"><g fill="none" stroke="#1a2e90" stroke-width="2.2"><path d="M7 4 L4.5 1.5 Q2.5 0.5 1.5 2 Q0.5 3.5 2 5 L5.5 8.5 Q7 9.5 8 8.5"/><path d="M8 11 L11 14 Q12.5 15 13.8 13.8 Q15 12.5 13.8 11 L10.5 7.5 Q9 6.5 8 7.5"/></g></svg>
<div class="t" style="left:655.5px;top:153.00px;font-size:12px;font-weight:normal;color:#222;letter-spacing:-0.1px">From URL</div>
<div class="t" style="left:475.5px;width:300px;text-align:center;top:174.00px;font-size:12px;font-weight:normal;color:#222;">Add Element</div>
<svg class="a" style="left:764px;top:105px" width="30" height="30" viewBox="0 0 30 30"><defs><radialGradient id="g764" cx="0.5" cy="0.35" r="0.6"><stop offset="0" stop-color="#f06070"/><stop offset="1" stop-color="#c01020"/></radialGradient></defs><circle cx="15" cy="15" r="14.3" fill="#888"/><circle cx="15" cy="15" r="13" fill="#e8e8e8"/><circle cx="15" cy="15" r="11.2" fill="url(#g764)"/><rect x="8" y="12" width="14" height="6" rx="1" fill="#f4f4f4"/></svg>
<svg class="a" style="left:812px;top:106px" width="24" height="28" viewBox="0 0 24 28"><path d="M2 3 L15 1.5 L16 24 L3 26.5 Z" fill="#e4eef8" stroke="#a8bcd0" stroke-width="0.8"/><path d="M4 9 L7 12 L12 6" stroke="#5cc05c" stroke-width="1.8" fill="none"/><path d="M11 22 L21 3 L23.5 4.5 L13.5 23 Z" fill="#3cb040"/><path d="M11 22 L13.5 23 L11.5 25.5 Z" fill="#d0a060"/></svg>
<div class="t" style="left:629px;width:300px;text-align:center;top:141.00px;font-size:12px;font-weight:normal;color:#222;">Delete</div>
<div class="t" style="left:674px;width:300px;text-align:center;top:141.00px;font-size:12px;font-weight:normal;color:#222;">Mark as</div>
<div class="t" style="left:674px;width:300px;text-align:center;top:155.00px;font-size:12px;font-weight:normal;color:#222;">Primary</div>
<div class="t" style="left:654px;width:300px;text-align:center;top:174.00px;font-size:12px;font-weight:normal;color:#222;">Edit Element</div>
<div class="a" style="left:1248px;top:86px;width:222px;height:115px;border-left:1px solid #a0a0a0;border-top:1px solid #dcdcdc;background:#fff"></div>
<svg class="a" style="left:1273px;top:92px" width="30" height="32" viewBox="0 0 30 32"><path d="M10 16 H12 M12 8.5 V27 M12 8.5 H14 M12 18 H14 M12 26.5 H14 M19 9 H21 M19 17 H21" stroke="#b8b8b8" stroke-width="1" fill="none"/><rect x="1" y="9" width="9.5" height="15" fill="#5a8ad0" stroke="#3a68a8" stroke-width="0.7"/><rect x="3" y="13" width="5" height="4" fill="#cfe0f4"/><rect x="13.3" y="5.5" width="5.9" height="6.7" fill="#40a860"/><rect x="13.3" y="14.8" width="5.9" height="6.7" fill="#40a860"/><rect x="13.3" y="23.2" width="5.9" height="6.7" fill="#40a860"/><rect x="20.5" y="0.5" width="4.5" height="5.8" fill="#d04050"/><rect x="20.5" y="14.4" width="4.5" height="5.1" fill="#d04050"/><path d="M14.5 8 L16 9.5 L18 7 M14.5 17.5 L16 19 L18 16.5 M14.5 26 L16 27.5 L18 25" stroke="#e0f0e0" stroke-width="0.7" fill="none"/></svg>
<svg class="a" style="left:1339px;top:93px" width="29" height="29" viewBox="0 0 29 29"><circle cx="14.5" cy="14.5" r="14" fill="#8a8a8a"/><circle cx="14.5" cy="14.5" r="12.6" fill="#e6e6e6"/><circle cx="14.5" cy="14.5" r="11" fill="#3cb03c"/><path d="M3.5 14.5 L9 9.5 V12.5 H20 V9.5 L25.5 14.5 L20 19.5 V16.5 H9 V19.5 Z" fill="#eef4ee"/></svg>
<svg class="a" style="left:1407px;top:92px" width="26" height="32" viewBox="0 0 26 32"><path d="M1 1 L22 3 V29 L1 27 Z" fill="#b8d8f0" stroke="#8ab8dc" stroke-width="0.8"/><rect x="3" y="5" width="17" height="20" fill="#f0f4f8"/><path d="M6 9 H10 M6 12 H10 M6 15 H10 M6 18 H10 M13 10 H17 M13 13 H17 M13 16 H17 M13 19 H17" stroke="#889" stroke-width="0.9"/></svg>
<div class="t" style="left:1136.5px;width:300px;text-align:center;top:127.00px;font-size:12px;font-weight:normal;color:#222;">Material</div>
<div class="t" style="left:1265.3px;top:143.00px;font-size:12px;font-weight:normal;color:#222;">Setup</div>
<div class="t" style="left:1204px;width:300px;text-align:center;top:127.00px;font-size:12px;font-weight:normal;color:#222;letter-spacing:-0.1px">Entry / Exit</div>
<div class="t" style="left:1269px;width:300px;text-align:center;top:127.00px;font-size:12px;font-weight:normal;color:#222;letter-spacing:-0.3px">Recipes</div>
<div class="a" style="left:346px;top:201px;width:1124px;height:781px;background:#383838"></div>
<div class="a" style="left:346px;top:982px;width:1125px;height:1px;background:#c4c4c4"></div>
<div class="a" style="left:1470px;top:201px;width:1px;height:782px;background:#c4c4c4"></div>
<div class="a" style="left:346px;top:200px;width:1124px;height:1px;background:#c8c8c8"></div>
<div class="a" style="left:346px;top:302px;width:20px;height:630px;background:#c0ccd4"></div>
<div class="a" style="left:366px;top:251px;width:1054px;height:681px;background:#c0ccd4"></div>
<div class="t" style="left:388.9px;top:273.00px;font-size:16.2px;font-weight:normal;color:#333;letter-spacing:-0.05px">Settings</div>
<div class="a" style="left:1375px;top:273px;width:18px;height:18px;border:1px solid #9a9a9a;background:linear-gradient(#f4f4f4,#e2e2e2)"></div>
<svg class="a" style="left:1377px;top:275px" width="14" height="14" viewBox="0 0 14 14"><circle cx="7" cy="7" r="6.3" fill="none" stroke="#777" stroke-width="0.9"/><circle cx="7" cy="7" r="5" fill="none" stroke="#888" stroke-width="0.6"/><circle cx="7" cy="7" r="4" fill="#e8203a"/><path d="M5 5 L9 9 M9 5 L5 9" stroke="#fff" stroke-width="1.8"/></svg>
<div class="a" style="left:378px;top:320px;width:1030px;height:568px;border:1px solid #a8a8a8;background:#fff"></div>
<div class="a" style="left:381px;top:298px;width:51px;height:23px;border:1px solid #acacac;background:linear-gradient(#f2f2f2,#e4e4e4)"></div>
<div class="t" style="left:390.4px;top:304.00px;font-size:12px;font-weight:normal;color:#222;letter-spacing:-0.55px">Basics</div>
<div class="a" style="left:431px;top:298px;width:89px;height:23px;border:1px solid #acacac;background:linear-gradient(#f2f2f2,#e4e4e4)"></div>
<div class="t" style="left:440.2px;top:304.00px;font-size:12px;font-weight:normal;color:#222;letter-spacing:-0.15px">Color Coding</div>
<div class="a" style="left:519px;top:298px;width:105px;height:23px;border:1px solid #acacac;background:linear-gradient(#f2f2f2,#e4e4e4)"></div>
<div class="t" style="left:528px;top:304.00px;font-size:12px;font-weight:normal;color:#222;letter-spacing:0.2px">Activity Splitting</div>
<div class="a" style="left:623px;top:296px;width:110px;height:25px;border:1px solid #acacac;border-bottom:none;background:#fff"></div>
<div class="t" style="left:632.5px;top:304.00px;font-size:12px;font-weight:normal;color:#222;letter-spacing:-0.15px">Part Assignments</div>
<div class="t" style="left:391.4px;top:339.00px;font-size:12px;font-weight:normal;color:#333;letter-spacing:-0.1px">Color Assignments by:</div>
<div class="a" style="left:512px;top:333px;width:883px;height:22px;border:1px solid #acacac;background:#fff"></div>
<div class="t" style="left:517.6px;top:339.00px;font-size:12px;font-weight:normal;color:#222;letter-spacing:-0.1px">Part Number</div>
<div class="a" style="left:1378px;top:336px;width:15px;height:17px;border:1px solid #acacac;background:linear-gradient(#f2f2f2,#e2e2e2)"></div>
<svg class="a" style="left:1381px;top:341px" width="9" height="6" viewBox="0 0 9 6"><path d="M0.8 0.8 L4.5 4.6 L8.2 0.8" fill="none" stroke="#555" stroke-width="1.3"/></svg>
<div class="a" style="left:396px;top:364px;width:470px;height:26px;border:1px solid #707070;background:#b0d6f0"></div>
<div class="t" style="left:481px;width:300px;text-align:center;top:371.00px;font-size:12px;font-weight:normal;color:#222;letter-spacing:-0.05px">Use Operation Assignments</div>
<div class="a" style="left:880px;top:364px;width:471px;height:26px;border:1px solid #707070;background:#f6f8fa"></div>
<div class="t" style="left:965px;width:300px;text-align:center;top:371.00px;font-size:12px;font-weight:normal;color:#222;letter-spacing:-0.1px">Use Custom Step Assignments</div>
<div class="a" style="left:1364px;top:364px;width:26px;height:26px;border:1.5px solid #2a78d4;background:#d6e8f8"></div>
<svg class="a" style="left:1367px;top:367px" width="20" height="20" viewBox="0 0 20 20"><defs><linearGradient id="bkg" x1="0" x2="1"><stop offset="0" stop-color="#6a0e0e"/><stop offset="1" stop-color="#b83838"/></linearGradient></defs><path d="M11 4 L17 2.5 V16 L11 17.5 Z" fill="#f4f4f4" stroke="#9a9a9a" stroke-width="0.5"/><path d="M12 6 H16 M12 9 H16 M12 12 H16" stroke="#888" stroke-width="0.6"/><rect x="16.5" y="4.5" width="2" height="3" fill="#e04040"/><rect x="16.5" y="8" width="2" height="3" fill="#40b040"/><rect x="16.5" y="11.5" width="2" height="3" fill="#3060d0"/><path d="M2 5.5 L11 2 V17.5 L2 19 Z" fill="url(#bkg)"/></svg>
<div class="a" style="left:391px;top:395px;width:1004px;height:480px;border:1px solid #c8c8c8;background:#fff;overflow:hidden"></div>
<div class="a" style="left:391px;top:418px;width:1004px;height:1px;background:#d6d6d6"></div>
<div class="a" style="left:461px;top:396px;width:1px;height:22px;background:#d6d6d6"></div>
<div class="a" style="left:526px;top:396px;width:1px;height:22px;background:#d6d6d6"></div>
<div class="a" style="left:561px;top:396px;width:1px;height:22px;background:#d6d6d6"></div>
<div class="a" style="left:691px;top:396px;width:1px;height:22px;background:#d6d6d6"></div>
<div class="a" style="left:901px;top:396px;width:1px;height:22px;background:#d6d6d6"></div>
<div class="a" style="left:1001px;top:396px;width:1px;height:22px;background:#d6d6d6"></div>
<div class="a" style="left:1101px;top:396px;width:1px;height:22px;background:#d6d6d6"></div>
<div class="a" style="left:1201px;top:396px;width:1px;height:22px;background:#d6d6d6"></div>
<div class="a" style="left:1377px;top:396px;width:1px;height:22px;background:#d6d6d6"></div>
<div class="t" style="left:466.4px;top:402.00px;font-size:12px;font-weight:normal;color:#333;letter-spacing:-0.15px">Line Item</div>
<div class="t" style="left:531px;top:402.00px;font-size:12px;font-weight:normal;color:#333;letter-spacing:-0.15px">Type</div>
<div class="t" style="left:566.3px;top:402.00px;font-size:12px;font-weight:normal;color:#333;letter-spacing:-0.15px">Part Number</div>
<div class="t" style="left:696.2px;top:402.00px;font-size:12px;font-weight:normal;color:#333;letter-spacing:-0.15px">Description</div>
<div class="t" style="left:906px;top:402.00px;font-size:12px;font-weight:normal;color:#333;letter-spacing:-0.15px">Assignments</div>
<div class="t" style="left:1006.4px;top:402.00px;font-size:12px;font-weight:normal;color:#333;letter-spacing:-0.15px">Available Quan...</div>
<div class="t" style="left:1106px;top:402.00px;font-size:12px;font-weight:normal;color:#333;letter-spacing:-0.15px">Total Quantity</div>
<div class="t" style="left:1206px;top:402.00px;font-size:12px;font-weight:normal;color:#333;letter-spacing:-0.15px">Unit of Issue</div>
<svg class="a" style="left:678px;top:404px" width="10" height="6" viewBox="0 0 10 6"><path d="M0 5.5 L5 0.5 L10 5.5 Z" fill="#444"/></svg>
<div class="a" style="left:411px;top:419px;width:50px;height:26px;background:#f2f2f2"></div>
<div class="a" style="left:462px;top:419px;width:915px;height:26px;background:#dcdcdc"></div>
<div class="a" style="left:411px;top:445px;width:966px;height:1px;background:#d6d6d6"></div>
<div class="a" style="left:411px;top:418px;width:1px;height:27px;background:#d6d6d6"></div>
<div class="a" style="left:461px;top:418px;width:1px;height:27px;background:#d6d6d6"></div>
<div class="a" style="left:526px;top:418px;width:1px;height:27px;background:#d6d6d6"></div>
<div class="a" style="left:561px;top:418px;width:1px;height:27px;background:#d6d6d6"></div>
<div class="a" style="left:691px;top:418px;width:1px;height:27px;background:#d6d6d6"></div>
<div class="a" style="left:901px;top:418px;width:1px;height:27px;background:#d6d6d6"></div>
<div class="a" style="left:1001px;top:418px;width:1px;height:27px;background:#d6d6d6"></div>
<div class="a" style="left:1101px;top:418px;width:1px;height:27px;background:#d6d6d6"></div>
<div class="a" style="left:1201px;top:418px;width:1px;height:27px;background:#d6d6d6"></div>
<div class="a" style="left:430px;top:426px;width:13px;height:13px;border:1px solid #7c7c7c;background:#fff"></div>
<div class="t" style="left:466.4px;top:427.00px;font-size:12px;font-weight:normal;color:#333;letter-spacing:-0.1px">11</div>
<svg class="a" style="left:540px;top:424px" width="8" height="15" viewBox="0 0 8 15"><defs><linearGradient id="btg" x1="0" x2="1"><stop offset="0" stop-color="#9cbccc"/><stop offset="0.5" stop-color="#7aa2b8"/><stop offset="1" stop-color="#6a94ac"/></linearGradient></defs><path d="M0.5 4 Q0.5 2.3 2 2.3 H6 Q7.5 2.3 7.5 4 V13.5 Q7.5 14.8 6 14.8 H2 Q0.5 14.8 0.5 13.5 Z" fill="url(#btg)"/><rect x="1.5" y="0.5" width="5" height="2.6" rx="1" fill="#3a7898"/><path d="M1.2 7 H4.5 V11.5 H1.2 Z" fill="#e8eef2"/></svg>
<div class="t" style="left:566.3px;top:427.00px;font-size:12px;font-weight:normal;color:#333;letter-spacing:-0.12px">588-mt-665</div>
<div class="t" style="left:696.2px;top:427.00px;font-size:12px;font-weight:normal;color:#333;letter-spacing:-0.12px">Metal Rod, Main Pivot, Rotator 360</div>
<div class="t" style="left:907px;top:427.00px;font-size:12px;font-weight:normal;color:#333;">0</div>
<div class="t" style="left:1007px;top:427.00px;font-size:12px;font-weight:normal;color:#333;">6</div>
<div class="t" style="left:1107px;top:427.00px;font-size:12px;font-weight:normal;color:#333;">6</div>
<div class="t" style="left:1207px;top:427.00px;font-size:12px;font-weight:normal;color:#333;letter-spacing:-0.1px">Pieces</div>
<div class="a" style="left:411px;top:472px;width:966px;height:1px;background:#d6d6d6"></div>
<div class="a" style="left:411px;top:445px;width:1px;height:27px;background:#d6d6d6"></div>
<div class="a" style="left:461px;top:445px;width:1px;height:27px;background:#d6d6d6"></div>
<div class="a" style="left:526px;top:445px;width:1px;height:27px;background:#d6d6d6"></div>
<div class="a" style="left:561px;top:445px;width:1px;height:27px;background:#d6d6d6"></div>
<div class="a" style="left:691px;top:445px;width:1px;height:27px;background:#d6d6d6"></div>
<div class="a" style="left:901px;top:445px;width:1px;height:27px;background:#d6d6d6"></div>
<div class="a" style="left:1001px;top:445px;width:1px;height:27px;background:#d6d6d6"></div>
<div class="a" style="left:1101px;top:445px;width:1px;height:27px;background:#d6d6d6"></div>
<div class="a" style="left:1201px;top:445px;width:1px;height:27px;background:#d6d6d6"></div>
<div class="a" style="left:430px;top:453px;width:13px;height:13px;border:1px solid #7c7c7c;background:#fff"></div>
<div class="t" style="left:466.4px;top:454.00px;font-size:12px;font-weight:normal;color:#333;letter-spacing:-0.1px">13</div>
<svg class="a" style="left:540px;top:451px" width="8" height="15" viewBox="0 0 8 15"><defs><linearGradient id="btg" x1="0" x2="1"><stop offset="0" stop-color="#9cbccc"/><stop offset="0.5" stop-color="#7aa2b8"/><stop offset="1" stop-color="#6a94ac"/></linearGradient></defs><path d="M0.5 4 Q0.5 2.3 2 2.3 H6 Q7.5 2.3 7.5 4 V13.5 Q7.5 14.8 6 14.8 H2 Q0.5 14.8 0.5 13.5 Z" fill="url(#btg)"/><rect x="1.5" y="0.5" width="5" height="2.6" rx="1" fill="#3a7898"/><path d="M1.2 7 H4.5 V11.5 H1.2 Z" fill="#e8eef2"/></svg>
<div class="t" style="left:566.3px;top:454.00px;font-size:12px;font-weight:normal;color:#333;letter-spacing:-0.12px">8-1254</div>
<div class="t" style="left:696.2px;top:454.00px;font-size:12px;font-weight:normal;color:#333;letter-spacing:-0.12px">Drive Belt, 6ft</div>
<div class="t" style="left:907px;top:454.00px;font-size:12px;font-weight:normal;color:#333;">0</div>
<div class="t" style="left:1007px;top:454.00px;font-size:12px;font-weight:normal;color:#333;">3</div>
<div class="t" style="left:1107px;top:454.00px;font-size:12px;font-weight:normal;color:#333;">3</div>
<div class="t" style="left:1207px;top:454.00px;font-size:12px;font-weight:normal;color:#333;letter-spacing:-0.1px">Pieces</div>
<div class="a" style="left:411px;top:499px;width:966px;height:1px;background:#d6d6d6"></div>
<div class="a" style="left:411px;top:472px;width:1px;height:27px;background:#d6d6d6"></div>
<div class="a" style="left:461px;top:472px;width:1px;height:27px;background:#d6d6d6"></div>
<div class="a" style="left:526px;top:472px;width:1px;height:27px;background:#d6d6d6"></div>
<div class="a" style="left:561px;top:472px;width:1px;height:27px;background:#d6d6d6"></div>
<div class="a" style="left:691px;top:472px;width:1px;height:27px;background:#d6d6d6"></div>
<div class="a" style="left:901px;top:472px;width:1px;height:27px;background:#d6d6d6"></div>
<div class="a" style="left:1001px;top:472px;width:1px;height:27px;background:#d6d6d6"></div>
<div class="a" style="left:1101px;top:472px;width:1px;height:27px;background:#d6d6d6"></div>
<div class="a" style="left:1201px;top:472px;width:1px;height:27px;background:#d6d6d6"></div>
<div class="a" style="left:430px;top:480px;width:13px;height:13px;border:1px solid #7c7c7c;background:#fff"></div>
<div class="t" style="left:466.4px;top:481.00px;font-size:12px;font-weight:normal;color:#333;letter-spacing:-0.1px">24</div>
<svg class="a" style="left:540px;top:478px" width="8" height="15" viewBox="0 0 8 15"><defs><linearGradient id="btg" x1="0" x2="1"><stop offset="0" stop-color="#9cbccc"/><stop offset="0.5" stop-color="#7aa2b8"/><stop offset="1" stop-color="#6a94ac"/></linearGradient></defs><path d="M0.5 4 Q0.5 2.3 2 2.3 H6 Q7.5 2.3 7.5 4 V13.5 Q7.5 14.8 6 14.8 H2 Q0.5 14.8 0.5 13.5 Z" fill="url(#btg)"/><rect x="1.5" y="0.5" width="5" height="2.6" rx="1" fill="#3a7898"/><path d="M1.2 7 H4.5 V11.5 H1.2 Z" fill="#e8eef2"/></svg>
<div class="t" style="left:566.3px;top:481.00px;font-size:12px;font-weight:normal;color:#333;letter-spacing:-0.12px">887SJF</div>
<div class="t" style="left:696.2px;top:481.00px;font-size:12px;font-weight:normal;color:#333;letter-spacing:-0.12px">Steel Mounting Bracket, Electricals,...</div>
<div class="t" style="left:907px;top:481.00px;font-size:12px;font-weight:normal;color:#333;">0</div>
<div class="t" style="left:1007px;top:481.00px;font-size:12px;font-weight:normal;color:#333;">0</div>
<div class="t" style="left:1107px;top:481.00px;font-size:12px;font-weight:normal;color:#333;">0</div>
<div class="t" style="left:1207px;top:481.00px;font-size:12px;font-weight:normal;color:#333;letter-spacing:-0.1px">Pieces</div>
<div class="a" style="left:411px;top:526px;width:966px;height:1px;background:#d6d6d6"></div>
<div class="a" style="left:411px;top:499px;width:1px;height:27px;background:#d6d6d6"></div>
<div class="a" style="left:461px;top:499px;width:1px;height:27px;background:#d6d6d6"></div>
<div class="a" style="left:526px;top:499px;width:1px;height:27px;background:#d6d6d6"></div>
<div class="a" style="left:561px;top:499px;width:1px;height:27px;background:#d6d6d6"></div>
<div class="a" style="left:691px;top:499px;width:1px;height:27px;background:#d6d6d6"></div>
<div class="a" style="left:901px;top:499px;width:1px;height:27px;background:#d6d6d6"></div>
<div class="a" style="left:1001px;top:499px;width:1px;height:27px;background:#d6d6d6"></div>
<div class="a" style="left:1101px;top:499px;width:1px;height:27px;background:#d6d6d6"></div>
<div class="a" style="left:1201px;top:499px;width:1px;height:27px;background:#d6d6d6"></div>
<div class="a" style="left:430px;top:507px;width:13px;height:13px;border:1px solid #7c7c7c;background:#fff"></div>
<div class="t" style="left:466.4px;top:508.00px;font-size:12px;font-weight:normal;color:#333;letter-spacing:-0.1px">1</div>
<svg class="a" style="left:540px;top:505px" width="8" height="15" viewBox="0 0 8 15"><defs><linearGradient id="btg" x1="0" x2="1"><stop offset="0" stop-color="#9cbccc"/><stop offset="0.5" stop-color="#7aa2b8"/><stop offset="1" stop-color="#6a94ac"/></linearGradient></defs><path d="M0.5 4 Q0.5 2.3 2 2.3 H6 Q7.5 2.3 7.5 4 V13.5 Q7.5 14.8 6 14.8 H2 Q0.5 14.8 0.5 13.5 Z" fill="url(#btg)"/><rect x="1.5" y="0.5" width="5" height="2.6" rx="1" fill="#3a7898"/><path d="M1.2 7 H4.5 V11.5 H1.2 Z" fill="#e8eef2"/></svg>
<div class="t" style="left:566.3px;top:508.00px;font-size:12px;font-weight:normal;color:#333;letter-spacing:-0.12px">BAS-1644</div>
<div class="t" style="left:696.2px;top:508.00px;font-size:12px;font-weight:normal;color:#333;letter-spacing:-0.12px">Base Stand Assembly, 1644, 210mm</div>
<div class="t" style="left:907px;top:508.00px;font-size:12px;font-weight:normal;color:#333;">0</div>
<div class="t" style="left:1007px;top:508.00px;font-size:12px;font-weight:normal;color:#333;">1</div>
<div class="t" style="left:1107px;top:508.00px;font-size:12px;font-weight:normal;color:#333;">1</div>
<div class="t" style="left:1207px;top:508.00px;font-size:12px;font-weight:normal;color:#333;letter-spacing:-0.1px">Pieces</div>
<div class="a" style="left:411px;top:553px;width:966px;height:1px;background:#d6d6d6"></div>
<div class="a" style="left:411px;top:526px;width:1px;height:27px;background:#d6d6d6"></div>
<div class="a" style="left:461px;top:526px;width:1px;height:27px;background:#d6d6d6"></div>
<div class="a" style="left:526px;top:526px;width:1px;height:27px;background:#d6d6d6"></div>
<div class="a" style="left:561px;top:526px;width:1px;height:27px;background:#d6d6d6"></div>
<div class="a" style="left:691px;top:526px;width:1px;height:27px;background:#d6d6d6"></div>
<div class="a" style="left:901px;top:526px;width:1px;height:27px;background:#d6d6d6"></div>
<div class="a" style="left:1001px;top:526px;width:1px;height:27px;background:#d6d6d6"></div>
<div class="a" style="left:1101px;top:526px;width:1px;height:27px;background:#d6d6d6"></div>
<div class="a" style="left:1201px;top:526px;width:1px;height:27px;background:#d6d6d6"></div>
<div class="a" style="left:430px;top:534px;width:13px;height:13px;border:1px solid #7c7c7c;background:#fff"></div>
<div class="t" style="left:466.4px;top:535.00px;font-size:12px;font-weight:normal;color:#333;letter-spacing:-0.1px">27</div>
<svg class="a" style="left:537px;top:533px" width="14" height="14" viewBox="0 0 14 14"><defs><linearGradient id="sqg" x1="0" y1="0" x2="1" y2="1"><stop offset="0" stop-color="#c8ecff"/><stop offset="0.45" stop-color="#3a78d8"/><stop offset="0.7" stop-color="#0020a8"/><stop offset="1" stop-color="#000a70"/></linearGradient><linearGradient id="sqr" x1="0" y1="0" x2="1" y2="1"><stop offset="0" stop-color="#ffa080"/><stop offset="1" stop-color="#f04a20"/></linearGradient></defs><rect x="0.4" y="0.4" width="13.2" height="13.2" fill="url(#sqg)" stroke="#1a1a80" stroke-width="0.8"/><rect x="0.4" y="7" width="6.8" height="6.6" fill="url(#sqr)" stroke="#a82000" stroke-width="0.8"/></svg>
<div class="t" style="left:566.3px;top:535.00px;font-size:12px;font-weight:normal;color:#333;letter-spacing:-0.45px">BASE-ASSY-1644 - A</div>
<div class="t" style="left:696.2px;top:535.00px;font-size:12px;font-weight:normal;color:#333;letter-spacing:-0.12px">Base Stand Assembly, 1644, 210mm</div>
<div class="t" style="left:907px;top:535.00px;font-size:12px;font-weight:normal;color:#333;">0</div>
<div class="t" style="left:1007px;top:535.00px;font-size:12px;font-weight:normal;color:#333;">1</div>
<div class="t" style="left:1107px;top:535.00px;font-size:12px;font-weight:normal;color:#333;">1</div>
<div class="t" style="left:1207px;top:535.00px;font-size:12px;font-weight:normal;color:#333;letter-spacing:-0.1px">Pieces</div>
<div class="a" style="left:411px;top:580px;width:966px;height:1px;background:#d6d6d6"></div>
<div class="a" style="left:411px;top:553px;width:1px;height:27px;background:#d6d6d6"></div>
<div class="a" style="left:461px;top:553px;width:1px;height:27px;background:#d6d6d6"></div>
<div class="a" style="left:526px;top:553px;width:1px;height:27px;background:#d6d6d6"></div>
<div class="a" style="left:561px;top:553px;width:1px;height:27px;background:#d6d6d6"></div>
<div class="a" style="left:691px;top:553px;width:1px;height:27px;background:#d6d6d6"></div>
<div class="a" style="left:901px;top:553px;width:1px;height:27px;background:#d6d6d6"></div>
<div class="a" style="left:1001px;top:553px;width:1px;height:27px;background:#d6d6d6"></div>
<div class="a" style="left:1101px;top:553px;width:1px;height:27px;background:#d6d6d6"></div>
<div class="a" style="left:1201px;top:553px;width:1px;height:27px;background:#d6d6d6"></div>
<div class="a" style="left:430px;top:561px;width:13px;height:13px;border:1px solid #7c7c7c;background:#fff"></div>
<div class="t" style="left:466.4px;top:562.00px;font-size:12px;font-weight:normal;color:#333;letter-spacing:-0.1px">21</div>
<svg class="a" style="left:540px;top:559px" width="8" height="15" viewBox="0 0 8 15"><defs><linearGradient id="btg" x1="0" x2="1"><stop offset="0" stop-color="#9cbccc"/><stop offset="0.5" stop-color="#7aa2b8"/><stop offset="1" stop-color="#6a94ac"/></linearGradient></defs><path d="M0.5 4 Q0.5 2.3 2 2.3 H6 Q7.5 2.3 7.5 4 V13.5 Q7.5 14.8 6 14.8 H2 Q0.5 14.8 0.5 13.5 Z" fill="url(#btg)"/><rect x="1.5" y="0.5" width="5" height="2.6" rx="1" fill="#3a7898"/><path d="M1.2 7 H4.5 V11.5 H1.2 Z" fill="#e8eef2"/></svg>
<div class="t" style="left:566.3px;top:562.00px;font-size:12px;font-weight:normal;color:#333;letter-spacing:-0.12px">BLT615</div>
<div class="t" style="left:696.2px;top:562.00px;font-size:12px;font-weight:normal;color:#333;letter-spacing:-0.12px">Steel Bolt, M6 x 20mm Full Thread C...</div>
<div class="t" style="left:907px;top:562.00px;font-size:12px;font-weight:normal;color:#333;">0</div>
<div class="t" style="left:1007px;top:562.00px;font-size:12px;font-weight:normal;color:#333;">10</div>
<div class="t" style="left:1107px;top:562.00px;font-size:12px;font-weight:normal;color:#333;">10</div>
<div class="t" style="left:1207px;top:562.00px;font-size:12px;font-weight:normal;color:#333;letter-spacing:-0.1px">Pieces</div>
<div class="a" style="left:411px;top:607px;width:966px;height:1px;background:#d6d6d6"></div>
<div class="a" style="left:411px;top:580px;width:1px;height:27px;background:#d6d6d6"></div>
<div class="a" style="left:461px;top:580px;width:1px;height:27px;background:#d6d6d6"></div>
<div class="a" style="left:526px;top:580px;width:1px;height:27px;background:#d6d6d6"></div>
<div class="a" style="left:561px;top:580px;width:1px;height:27px;background:#d6d6d6"></div>
<div class="a" style="left:691px;top:580px;width:1px;height:27px;background:#d6d6d6"></div>
<div class="a" style="left:901px;top:580px;width:1px;height:27px;background:#d6d6d6"></div>
<div class="a" style="left:1001px;top:580px;width:1px;height:27px;background:#d6d6d6"></div>
<div class="a" style="left:1101px;top:580px;width:1px;height:27px;background:#d6d6d6"></div>
<div class="a" style="left:1201px;top:580px;width:1px;height:27px;background:#d6d6d6"></div>
<div class="a" style="left:430px;top:588px;width:13px;height:13px;border:1px solid #7c7c7c;background:#fff"></div>
<div class="t" style="left:466.4px;top:589.00px;font-size:12px;font-weight:normal;color:#333;letter-spacing:-0.1px">12</div>
<svg class="a" style="left:540px;top:586px" width="8" height="15" viewBox="0 0 8 15"><defs><linearGradient id="btg" x1="0" x2="1"><stop offset="0" stop-color="#9cbccc"/><stop offset="0.5" stop-color="#7aa2b8"/><stop offset="1" stop-color="#6a94ac"/></linearGradient></defs><path d="M0.5 4 Q0.5 2.3 2 2.3 H6 Q7.5 2.3 7.5 4 V13.5 Q7.5 14.8 6 14.8 H2 Q0.5 14.8 0.5 13.5 Z" fill="url(#btg)"/><rect x="1.5" y="0.5" width="5" height="2.6" rx="1" fill="#3a7898"/><path d="M1.2 7 H4.5 V11.5 H1.2 Z" fill="#e8eef2"/></svg>
<div class="t" style="left:566.3px;top:589.00px;font-size:12px;font-weight:normal;color:#333;letter-spacing:-0.12px">C-8875-CON</div>
<div class="t" style="left:696.2px;top:589.00px;font-size:12px;font-weight:normal;color:#333;letter-spacing:-0.12px">RJ-45, CCA conn cable, 6ft</div>
<div class="t" style="left:907px;top:589.00px;font-size:12px;font-weight:normal;color:#333;">0</div>
<div class="t" style="left:1007px;top:589.00px;font-size:12px;font-weight:normal;color:#333;">2</div>
<div class="t" style="left:1107px;top:589.00px;font-size:12px;font-weight:normal;color:#333;">2</div>
<div class="t" style="left:1207px;top:589.00px;font-size:12px;font-weight:normal;color:#333;letter-spacing:-0.1px">Pieces</div>
<div class="a" style="left:411px;top:634px;width:966px;height:1px;background:#d6d6d6"></div>
<div class="a" style="left:411px;top:607px;width:1px;height:27px;background:#d6d6d6"></div>
<div class="a" style="left:461px;top:607px;width:1px;height:27px;background:#d6d6d6"></div>
<div class="a" style="left:526px;top:607px;width:1px;height:27px;background:#d6d6d6"></div>
<div class="a" style="left:561px;top:607px;width:1px;height:27px;background:#d6d6d6"></div>
<div class="a" style="left:691px;top:607px;width:1px;height:27px;background:#d6d6d6"></div>
<div class="a" style="left:901px;top:607px;width:1px;height:27px;background:#d6d6d6"></div>
<div class="a" style="left:1001px;top:607px;width:1px;height:27px;background:#d6d6d6"></div>
<div class="a" style="left:1101px;top:607px;width:1px;height:27px;background:#d6d6d6"></div>
<div class="a" style="left:1201px;top:607px;width:1px;height:27px;background:#d6d6d6"></div>
<div class="a" style="left:430px;top:615px;width:13px;height:13px;border:1px solid #7c7c7c;background:#fff"></div>
<div class="t" style="left:466.4px;top:616.00px;font-size:12px;font-weight:normal;color:#333;letter-spacing:-0.1px">14</div>
<svg class="a" style="left:536px;top:610px" width="17" height="20" viewBox="0 0 17 20"><path d="M0.6 4.4 L8.6 11.6" stroke="#555" stroke-width="1.9"/><path d="M0.9 4.6 L8.3 11.3" stroke="#eee" stroke-width="0.7"/><path d="M9.2 12.2 L15.3 17.3" stroke="#c89000" stroke-width="3"/><path d="M9.2 12 L15.3 17.1" stroke="#ffd21a" stroke-width="1.8"/><path d="M11.6 7.2 L2.2 17" stroke="#111" stroke-width="1.9"/><circle cx="1.8" cy="17.4" r="1.4" fill="#fff" stroke="#222" stroke-width="0.8"/><path d="M10.2 7.2 Q9.6 3.4 12.6 2.4 L11.8 5.2 L13.4 6.6 L15.8 5.6 Q15.4 8.8 11.8 8.6 Z" fill="#666" stroke="#333" stroke-width="0.5"/></svg>
<div class="t" style="left:566.3px;top:616.00px;font-size:12px;font-weight:normal;color:#333;letter-spacing:-0.12px">DID-4</div>
<div class="t" style="left:696.2px;top:616.00px;font-size:12px;font-weight:normal;color:#333;letter-spacing:-0.12px">Digital Torque Driver</div>
<div class="t" style="left:907px;top:616.00px;font-size:12px;font-weight:normal;color:#333;">0</div>
<div class="t" style="left:1007px;top:616.00px;font-size:12px;font-weight:normal;color:#333;">0</div>
<div class="t" style="left:1107px;top:616.00px;font-size:12px;font-weight:normal;color:#333;">0</div>
<div class="t" style="left:1207px;top:616.00px;font-size:12px;font-weight:normal;color:#333;letter-spacing:-0.1px">Pieces</div>
<div class="a" style="left:411px;top:661px;width:966px;height:1px;background:#d6d6d6"></div>
<div class="a" style="left:411px;top:634px;width:1px;height:27px;background:#d6d6d6"></div>
<div class="a" style="left:461px;top:634px;width:1px;height:27px;background:#d6d6d6"></div>
<div class="a" style="left:526px;top:634px;width:1px;height:27px;background:#d6d6d6"></div>
<div class="a" style="left:561px;top:634px;width:1px;height:27px;background:#d6d6d6"></div>
<div class="a" style="left:691px;top:634px;width:1px;height:27px;background:#d6d6d6"></div>
<div class="a" style="left:901px;top:634px;width:1px;height:27px;background:#d6d6d6"></div>
<div class="a" style="left:1001px;top:634px;width:1px;height:27px;background:#d6d6d6"></div>
<div class="a" style="left:1101px;top:634px;width:1px;height:27px;background:#d6d6d6"></div>
<div class="a" style="left:1201px;top:634px;width:1px;height:27px;background:#d6d6d6"></div>
<div class="a" style="left:430px;top:642px;width:13px;height:13px;border:1px solid #7c7c7c;background:#fff"></div>
<div class="t" style="left:466.4px;top:643.00px;font-size:12px;font-weight:normal;color:#333;letter-spacing:-0.1px">26</div>
<svg class="a" style="left:540px;top:640px" width="8" height="15" viewBox="0 0 8 15"><defs><linearGradient id="btg" x1="0" x2="1"><stop offset="0" stop-color="#9cbccc"/><stop offset="0.5" stop-color="#7aa2b8"/><stop offset="1" stop-color="#6a94ac"/></linearGradient></defs><path d="M0.5 4 Q0.5 2.3 2 2.3 H6 Q7.5 2.3 7.5 4 V13.5 Q7.5 14.8 6 14.8 H2 Q0.5 14.8 0.5 13.5 Z" fill="url(#btg)"/><rect x="1.5" y="0.5" width="5" height="2.6" rx="1" fill="#3a7898"/><path d="M1.2 7 H4.5 V11.5 H1.2 Z" fill="#e8eef2"/></svg>
<div class="t" style="left:566.3px;top:643.00px;font-size:12px;font-weight:normal;color:#333;letter-spacing:-0.12px">Drive Controller INF-...</div>
<div class="t" style="left:696.2px;top:643.00px;font-size:12px;font-weight:normal;color:#333;letter-spacing:-0.12px">Industrial Arm Drive Control Unit</div>
<div class="t" style="left:907px;top:643.00px;font-size:12px;font-weight:normal;color:#333;">0</div>
<div class="t" style="left:1007px;top:643.00px;font-size:12px;font-weight:normal;color:#333;">0</div>
<div class="t" style="left:1107px;top:643.00px;font-size:12px;font-weight:normal;color:#333;">0</div>
<div class="t" style="left:1207px;top:643.00px;font-size:12px;font-weight:normal;color:#333;letter-spacing:-0.1px">Pieces</div>
<div class="a" style="left:411px;top:688px;width:966px;height:1px;background:#d6d6d6"></div>
<div class="a" style="left:411px;top:661px;width:1px;height:27px;background:#d6d6d6"></div>
<div class="a" style="left:461px;top:661px;width:1px;height:27px;background:#d6d6d6"></div>
<div class="a" style="left:526px;top:661px;width:1px;height:27px;background:#d6d6d6"></div>
<div class="a" style="left:561px;top:661px;width:1px;height:27px;background:#d6d6d6"></div>
<div class="a" style="left:691px;top:661px;width:1px;height:27px;background:#d6d6d6"></div>
<div class="a" style="left:901px;top:661px;width:1px;height:27px;background:#d6d6d6"></div>
<div class="a" style="left:1001px;top:661px;width:1px;height:27px;background:#d6d6d6"></div>
<div class="a" style="left:1101px;top:661px;width:1px;height:27px;background:#d6d6d6"></div>
<div class="a" style="left:1201px;top:661px;width:1px;height:27px;background:#d6d6d6"></div>
<div class="a" style="left:430px;top:669px;width:13px;height:13px;border:1px solid #7c7c7c;background:#fff"></div>
<div class="t" style="left:466.4px;top:670.00px;font-size:12px;font-weight:normal;color:#333;letter-spacing:-0.1px">7</div>
<svg class="a" style="left:540px;top:667px" width="8" height="15" viewBox="0 0 8 15"><defs><linearGradient id="btg" x1="0" x2="1"><stop offset="0" stop-color="#9cbccc"/><stop offset="0.5" stop-color="#7aa2b8"/><stop offset="1" stop-color="#6a94ac"/></linearGradient></defs><path d="M0.5 4 Q0.5 2.3 2 2.3 H6 Q7.5 2.3 7.5 4 V13.5 Q7.5 14.8 6 14.8 H2 Q0.5 14.8 0.5 13.5 Z" fill="url(#btg)"/><rect x="1.5" y="0.5" width="5" height="2.6" rx="1" fill="#3a7898"/><path d="M1.2 7 H4.5 V11.5 H1.2 Z" fill="#e8eef2"/></svg>
<div class="t" style="left:566.3px;top:670.00px;font-size:12px;font-weight:normal;color:#333;letter-spacing:-0.12px">DSK-84</div>
<div class="t" style="left:696.2px;top:670.00px;font-size:12px;font-weight:normal;color:#333;letter-spacing:-0.12px">Disk Head Adapter Assembly, 84, 22...</div>
<div class="t" style="left:907px;top:670.00px;font-size:12px;font-weight:normal;color:#333;">0</div>
<div class="t" style="left:1007px;top:670.00px;font-size:12px;font-weight:normal;color:#333;">1</div>
<div class="t" style="left:1107px;top:670.00px;font-size:12px;font-weight:normal;color:#333;">1</div>
<div class="t" style="left:1207px;top:670.00px;font-size:12px;font-weight:normal;color:#333;letter-spacing:-0.1px">Pieces</div>
<div class="a" style="left:411px;top:715px;width:966px;height:1px;background:#d6d6d6"></div>
<div class="a" style="left:411px;top:688px;width:1px;height:27px;background:#d6d6d6"></div>
<div class="a" style="left:461px;top:688px;width:1px;height:27px;background:#d6d6d6"></div>
<div class="a" style="left:526px;top:688px;width:1px;height:27px;background:#d6d6d6"></div>
<div class="a" style="left:561px;top:688px;width:1px;height:27px;background:#d6d6d6"></div>
<div class="a" style="left:691px;top:688px;width:1px;height:27px;background:#d6d6d6"></div>
<div class="a" style="left:901px;top:688px;width:1px;height:27px;background:#d6d6d6"></div>
<div class="a" style="left:1001px;top:688px;width:1px;height:27px;background:#d6d6d6"></div>
<div class="a" style="left:1101px;top:688px;width:1px;height:27px;background:#d6d6d6"></div>
<div class="a" style="left:1201px;top:688px;width:1px;height:27px;background:#d6d6d6"></div>
<div class="a" style="left:430px;top:696px;width:13px;height:13px;border:1px solid #7c7c7c;background:#fff"></div>
<div class="t" style="left:466.4px;top:697.00px;font-size:12px;font-weight:normal;color:#333;letter-spacing:-0.1px">10</div>
<svg class="a" style="left:540px;top:694px" width="8" height="15" viewBox="0 0 8 15"><defs><linearGradient id="btg" x1="0" x2="1"><stop offset="0" stop-color="#9cbccc"/><stop offset="0.5" stop-color="#7aa2b8"/><stop offset="1" stop-color="#6a94ac"/></linearGradient></defs><path d="M0.5 4 Q0.5 2.3 2 2.3 H6 Q7.5 2.3 7.5 4 V13.5 Q7.5 14.8 6 14.8 H2 Q0.5 14.8 0.5 13.5 Z" fill="url(#btg)"/><rect x="1.5" y="0.5" width="5" height="2.6" rx="1" fill="#3a7898"/><path d="M1.2 7 H4.5 V11.5 H1.2 Z" fill="#e8eef2"/></svg>
<div class="t" style="left:566.3px;top:697.00px;font-size:12px;font-weight:normal;color:#333;letter-spacing:-0.12px">GD-2338</div>
<div class="t" style="left:696.2px;top:697.00px;font-size:12px;font-weight:normal;color:#333;letter-spacing:-0.12px">Guide Pins,2 pcs, D6x20, ISO 2338-...</div>
<div class="t" style="left:907px;top:697.00px;font-size:12px;font-weight:normal;color:#333;">0</div>
<div class="t" style="left:1007px;top:697.00px;font-size:12px;font-weight:normal;color:#333;">16</div>
<div class="t" style="left:1107px;top:697.00px;font-size:12px;font-weight:normal;color:#333;">16</div>
<div class="t" style="left:1207px;top:697.00px;font-size:12px;font-weight:normal;color:#333;letter-spacing:-0.1px">Pieces</div>
<div class="a" style="left:411px;top:742px;width:966px;height:1px;background:#d6d6d6"></div>
<div class="a" style="left:411px;top:715px;width:1px;height:27px;background:#d6d6d6"></div>
<div class="a" style="left:461px;top:715px;width:1px;height:27px;background:#d6d6d6"></div>
<div class="a" style="left:526px;top:715px;width:1px;height:27px;background:#d6d6d6"></div>
<div class="a" style="left:561px;top:715px;width:1px;height:27px;background:#d6d6d6"></div>
<div class="a" style="left:691px;top:715px;width:1px;height:27px;background:#d6d6d6"></div>
<div class="a" style="left:901px;top:715px;width:1px;height:27px;background:#d6d6d6"></div>
<div class="a" style="left:1001px;top:715px;width:1px;height:27px;background:#d6d6d6"></div>
<div class="a" style="left:1101px;top:715px;width:1px;height:27px;background:#d6d6d6"></div>
<div class="a" style="left:1201px;top:715px;width:1px;height:27px;background:#d6d6d6"></div>
<div class="a" style="left:430px;top:723px;width:13px;height:13px;border:1px solid #7c7c7c;background:#fff"></div>
<div class="t" style="left:466.4px;top:724.00px;font-size:12px;font-weight:normal;color:#333;letter-spacing:-0.1px">29</div>
<svg class="a" style="left:537px;top:722px" width="14" height="14" viewBox="0 0 14 14"><defs><linearGradient id="sqg" x1="0" y1="0" x2="1" y2="1"><stop offset="0" stop-color="#c8ecff"/><stop offset="0.45" stop-color="#3a78d8"/><stop offset="0.7" stop-color="#0020a8"/><stop offset="1" stop-color="#000a70"/></linearGradient><linearGradient id="sqr" x1="0" y1="0" x2="1" y2="1"><stop offset="0" stop-color="#ffa080"/><stop offset="1" stop-color="#f04a20"/></linearGradient></defs><rect x="0.4" y="0.4" width="13.2" height="13.2" fill="url(#sqg)" stroke="#1a1a80" stroke-width="0.8"/><rect x="0.4" y="7" width="6.8" height="6.6" fill="url(#sqr)" stroke="#a82000" stroke-width="0.8"/></svg>
<div class="t" style="left:566.3px;top:724.00px;font-size:12px;font-weight:normal;color:#333;letter-spacing:-0.45px">LOWER-ARM-2182 - B</div>
<div class="t" style="left:696.2px;top:724.00px;font-size:12px;font-weight:normal;color:#333;letter-spacing:-0.12px">Lower Arm Assembly, 2182, 350mm</div>
<div class="t" style="left:907px;top:724.00px;font-size:12px;font-weight:normal;color:#333;">0</div>
<div class="t" style="left:1007px;top:724.00px;font-size:12px;font-weight:normal;color:#333;">1</div>
<div class="t" style="left:1107px;top:724.00px;font-size:12px;font-weight:normal;color:#333;">1</div>
<div class="t" style="left:1207px;top:724.00px;font-size:12px;font-weight:normal;color:#333;letter-spacing:-0.1px">Pieces</div>
<div class="a" style="left:411px;top:769px;width:966px;height:1px;background:#d6d6d6"></div>
<div class="a" style="left:411px;top:742px;width:1px;height:27px;background:#d6d6d6"></div>
<div class="a" style="left:461px;top:742px;width:1px;height:27px;background:#d6d6d6"></div>
<div class="a" style="left:526px;top:742px;width:1px;height:27px;background:#d6d6d6"></div>
<div class="a" style="left:561px;top:742px;width:1px;height:27px;background:#d6d6d6"></div>
<div class="a" style="left:691px;top:742px;width:1px;height:27px;background:#d6d6d6"></div>
<div class="a" style="left:901px;top:742px;width:1px;height:27px;background:#d6d6d6"></div>
<div class="a" style="left:1001px;top:742px;width:1px;height:27px;background:#d6d6d6"></div>
<div class="a" style="left:1101px;top:742px;width:1px;height:27px;background:#d6d6d6"></div>
<div class="a" style="left:1201px;top:742px;width:1px;height:27px;background:#d6d6d6"></div>
<div class="a" style="left:430px;top:750px;width:13px;height:13px;border:1px solid #7c7c7c;background:#fff"></div>
<div class="t" style="left:466.4px;top:751.00px;font-size:12px;font-weight:normal;color:#333;letter-spacing:-0.1px">3</div>
<svg class="a" style="left:540px;top:748px" width="8" height="15" viewBox="0 0 8 15"><defs><linearGradient id="btg" x1="0" x2="1"><stop offset="0" stop-color="#9cbccc"/><stop offset="0.5" stop-color="#7aa2b8"/><stop offset="1" stop-color="#6a94ac"/></linearGradient></defs><path d="M0.5 4 Q0.5 2.3 2 2.3 H6 Q7.5 2.3 7.5 4 V13.5 Q7.5 14.8 6 14.8 H2 Q0.5 14.8 0.5 13.5 Z" fill="url(#btg)"/><rect x="1.5" y="0.5" width="5" height="2.6" rx="1" fill="#3a7898"/><path d="M1.2 7 H4.5 V11.5 H1.2 Z" fill="#e8eef2"/></svg>
<div class="t" style="left:566.3px;top:751.00px;font-size:12px;font-weight:normal;color:#333;letter-spacing:-0.12px">LWR-A-2182</div>
<div class="t" style="left:696.2px;top:751.00px;font-size:12px;font-weight:normal;color:#333;letter-spacing:-0.12px">Lower Arm Assembly, 2182, 350mm</div>
<div class="t" style="left:907px;top:751.00px;font-size:12px;font-weight:normal;color:#333;">0</div>
<div class="t" style="left:1007px;top:751.00px;font-size:12px;font-weight:normal;color:#333;">1</div>
<div class="t" style="left:1107px;top:751.00px;font-size:12px;font-weight:normal;color:#333;">1</div>
<div class="t" style="left:1207px;top:751.00px;font-size:12px;font-weight:normal;color:#333;letter-spacing:-0.1px">Pieces</div>
<div class="a" style="left:411px;top:796px;width:966px;height:1px;background:#d6d6d6"></div>
<div class="a" style="left:411px;top:769px;width:1px;height:27px;background:#d6d6d6"></div>
<div class="a" style="left:461px;top:769px;width:1px;height:27px;background:#d6d6d6"></div>
<div class="a" style="left:526px;top:769px;width:1px;height:27px;background:#d6d6d6"></div>
<div class="a" style="left:561px;top:769px;width:1px;height:27px;background:#d6d6d6"></div>
<div class="a" style="left:691px;top:769px;width:1px;height:27px;background:#d6d6d6"></div>
<div class="a" style="left:901px;top:769px;width:1px;height:27px;background:#d6d6d6"></div>
<div class="a" style="left:1001px;top:769px;width:1px;height:27px;background:#d6d6d6"></div>
<div class="a" style="left:1101px;top:769px;width:1px;height:27px;background:#d6d6d6"></div>
<div class="a" style="left:1201px;top:769px;width:1px;height:27px;background:#d6d6d6"></div>
<div class="a" style="left:430px;top:777px;width:13px;height:13px;border:1px solid #7c7c7c;background:#fff"></div>
<div class="t" style="left:466.4px;top:778.00px;font-size:12px;font-weight:normal;color:#333;letter-spacing:-0.1px">8</div>
<svg class="a" style="left:540px;top:775px" width="8" height="15" viewBox="0 0 8 15"><defs><linearGradient id="btg" x1="0" x2="1"><stop offset="0" stop-color="#9cbccc"/><stop offset="0.5" stop-color="#7aa2b8"/><stop offset="1" stop-color="#6a94ac"/></linearGradient></defs><path d="M0.5 4 Q0.5 2.3 2 2.3 H6 Q7.5 2.3 7.5 4 V13.5 Q7.5 14.8 6 14.8 H2 Q0.5 14.8 0.5 13.5 Z" fill="url(#btg)"/><rect x="1.5" y="0.5" width="5" height="2.6" rx="1" fill="#3a7898"/><path d="M1.2 7 H4.5 V11.5 H1.2 Z" fill="#e8eef2"/></svg>
<div class="t" style="left:566.3px;top:778.00px;font-size:12px;font-weight:normal;color:#333;letter-spacing:-0.12px">M12x35</div>
<div class="t" style="left:696.2px;top:778.00px;font-size:12px;font-weight:normal;color:#333;letter-spacing:-0.12px">Machine Screw, Phillips</div>
<div class="t" style="left:907px;top:778.00px;font-size:12px;font-weight:normal;color:#333;">0</div>
<div class="t" style="left:1007px;top:778.00px;font-size:12px;font-weight:normal;color:#333;">25</div>
<div class="t" style="left:1107px;top:778.00px;font-size:12px;font-weight:normal;color:#333;">25</div>
<div class="t" style="left:1207px;top:778.00px;font-size:12px;font-weight:normal;color:#333;letter-spacing:-0.1px">Pieces</div>
<div class="a" style="left:411px;top:823px;width:966px;height:1px;background:#d6d6d6"></div>
<div class="a" style="left:411px;top:796px;width:1px;height:27px;background:#d6d6d6"></div>
<div class="a" style="left:461px;top:796px;width:1px;height:27px;background:#d6d6d6"></div>
<div class="a" style="left:526px;top:796px;width:1px;height:27px;background:#d6d6d6"></div>
<div class="a" style="left:561px;top:796px;width:1px;height:27px;background:#d6d6d6"></div>
<div class="a" style="left:691px;top:796px;width:1px;height:27px;background:#d6d6d6"></div>
<div class="a" style="left:901px;top:796px;width:1px;height:27px;background:#d6d6d6"></div>
<div class="a" style="left:1001px;top:796px;width:1px;height:27px;background:#d6d6d6"></div>
<div class="a" style="left:1101px;top:796px;width:1px;height:27px;background:#d6d6d6"></div>
<div class="a" style="left:1201px;top:796px;width:1px;height:27px;background:#d6d6d6"></div>
<div class="a" style="left:430px;top:804px;width:13px;height:13px;border:1px solid #7c7c7c;background:#fff"></div>
<div class="t" style="left:466.4px;top:805.00px;font-size:12px;font-weight:normal;color:#333;letter-spacing:-0.1px">5</div>
<svg class="a" style="left:540px;top:802px" width="8" height="15" viewBox="0 0 8 15"><defs><linearGradient id="btg" x1="0" x2="1"><stop offset="0" stop-color="#9cbccc"/><stop offset="0.5" stop-color="#7aa2b8"/><stop offset="1" stop-color="#6a94ac"/></linearGradient></defs><path d="M0.5 4 Q0.5 2.3 2 2.3 H6 Q7.5 2.3 7.5 4 V13.5 Q7.5 14.8 6 14.8 H2 Q0.5 14.8 0.5 13.5 Z" fill="url(#btg)"/><rect x="1.5" y="0.5" width="5" height="2.6" rx="1" fill="#3a7898"/><path d="M1.2 7 H4.5 V11.5 H1.2 Z" fill="#e8eef2"/></svg>
<div class="t" style="left:566.3px;top:805.00px;font-size:12px;font-weight:normal;color:#333;letter-spacing:-0.12px">NCK-615</div>
<div class="t" style="left:696.2px;top:805.00px;font-size:12px;font-weight:normal;color:#333;letter-spacing:-0.12px">Neck Assembly, 615, 82mm</div>
<div class="t" style="left:907px;top:805.00px;font-size:12px;font-weight:normal;color:#333;">0</div>
<div class="t" style="left:1007px;top:805.00px;font-size:12px;font-weight:normal;color:#333;">1</div>
<div class="t" style="left:1107px;top:805.00px;font-size:12px;font-weight:normal;color:#333;">1</div>
<div class="t" style="left:1207px;top:805.00px;font-size:12px;font-weight:normal;color:#333;letter-spacing:-0.1px">Pieces</div>
<div class="a" style="left:411px;top:850px;width:966px;height:1px;background:#d6d6d6"></div>
<div class="a" style="left:411px;top:823px;width:1px;height:27px;background:#d6d6d6"></div>
<div class="a" style="left:461px;top:823px;width:1px;height:27px;background:#d6d6d6"></div>
<div class="a" style="left:526px;top:823px;width:1px;height:27px;background:#d6d6d6"></div>
<div class="a" style="left:561px;top:823px;width:1px;height:27px;background:#d6d6d6"></div>
<div class="a" style="left:691px;top:823px;width:1px;height:27px;background:#d6d6d6"></div>
<div class="a" style="left:901px;top:823px;width:1px;height:27px;background:#d6d6d6"></div>
<div class="a" style="left:1001px;top:823px;width:1px;height:27px;background:#d6d6d6"></div>
<div class="a" style="left:1101px;top:823px;width:1px;height:27px;background:#d6d6d6"></div>
<div class="a" style="left:1201px;top:823px;width:1px;height:27px;background:#d6d6d6"></div>
<div class="a" style="left:430px;top:831px;width:13px;height:13px;border:1px solid #7c7c7c;background:#fff"></div>
<div class="t" style="left:466.4px;top:832.00px;font-size:12px;font-weight:normal;color:#333;letter-spacing:-0.1px">31</div>
<svg class="a" style="left:537px;top:830px" width="14" height="14" viewBox="0 0 14 14"><defs><linearGradient id="sqg" x1="0" y1="0" x2="1" y2="1"><stop offset="0" stop-color="#c8ecff"/><stop offset="0.45" stop-color="#3a78d8"/><stop offset="0.7" stop-color="#0020a8"/><stop offset="1" stop-color="#000a70"/></linearGradient><linearGradient id="sqr" x1="0" y1="0" x2="1" y2="1"><stop offset="0" stop-color="#ffa080"/><stop offset="1" stop-color="#f04a20"/></linearGradient></defs><rect x="0.4" y="0.4" width="13.2" height="13.2" fill="url(#sqg)" stroke="#1a1a80" stroke-width="0.8"/><rect x="0.4" y="7" width="6.8" height="6.6" fill="url(#sqr)" stroke="#a82000" stroke-width="0.8"/></svg>
<div class="t" style="left:566.3px;top:832.00px;font-size:12px;font-weight:normal;color:#333;letter-spacing:-0.45px">ROTARY-HEAD-ASSY...</div>
<div class="t" style="left:696.2px;top:832.00px;font-size:12px;font-weight:normal;color:#333;letter-spacing:-0.12px">Rotary Head Assembly, 615, with Cl...</div>
<div class="t" style="left:907px;top:832.00px;font-size:12px;font-weight:normal;color:#333;">0</div>
<div class="t" style="left:1007px;top:832.00px;font-size:12px;font-weight:normal;color:#333;">1</div>
<div class="t" style="left:1107px;top:832.00px;font-size:12px;font-weight:normal;color:#333;">1</div>
<div class="t" style="left:1207px;top:832.00px;font-size:12px;font-weight:normal;color:#333;letter-spacing:-0.1px">Pieces</div>
<div class="a" style="left:411px;top:850px;width:1px;height:24px;background:#d6d6d6"></div>
<div class="a" style="left:461px;top:850px;width:1px;height:24px;background:#d6d6d6"></div>
<div class="a" style="left:526px;top:850px;width:1px;height:24px;background:#d6d6d6"></div>
<div class="a" style="left:561px;top:850px;width:1px;height:24px;background:#d6d6d6"></div>
<div class="a" style="left:691px;top:850px;width:1px;height:24px;background:#d6d6d6"></div>
<div class="a" style="left:901px;top:850px;width:1px;height:24px;background:#d6d6d6"></div>
<div class="a" style="left:1001px;top:850px;width:1px;height:24px;background:#d6d6d6"></div>
<div class="a" style="left:1101px;top:850px;width:1px;height:24px;background:#d6d6d6"></div>
<div class="a" style="left:1201px;top:850px;width:1px;height:24px;background:#d6d6d6"></div>
<div class="a" style="left:430px;top:858px;width:13px;height:13px;border:1px solid #7c7c7c;background:#fff"></div>
<div class="t" style="left:466.4px;top:859.00px;font-size:12px;font-weight:normal;color:#333;letter-spacing:-0.1px">15</div>
<svg class="a" style="left:540px;top:856px" width="8" height="15" viewBox="0 0 8 15"><defs><linearGradient id="btg" x1="0" x2="1"><stop offset="0" stop-color="#9cbccc"/><stop offset="0.5" stop-color="#7aa2b8"/><stop offset="1" stop-color="#6a94ac"/></linearGradient></defs><path d="M0.5 4 Q0.5 2.3 2 2.3 H6 Q7.5 2.3 7.5 4 V13.5 Q7.5 14.8 6 14.8 H2 Q0.5 14.8 0.5 13.5 Z" fill="url(#btg)"/><rect x="1.5" y="0.5" width="5" height="2.6" rx="1" fill="#3a7898"/><path d="M1.2 7 H4.5 V11.5 H1.2 Z" fill="#e8eef2"/></svg>
<div class="t" style="left:566.3px;top:859.00px;font-size:12px;font-weight:normal;color:#333;letter-spacing:-0.12px">Servo Motor SV-1 - A</div>
<div class="t" style="left:696.2px;top:859.00px;font-size:12px;font-weight:normal;color:#333;letter-spacing:-0.12px">SG90 Servo Motor Micro Servo 9G S...</div>
<div class="t" style="left:907px;top:859.00px;font-size:12px;font-weight:normal;color:#333;">0</div>
<div class="t" style="left:1007px;top:859.00px;font-size:12px;font-weight:normal;color:#333;">1</div>
<div class="t" style="left:1107px;top:859.00px;font-size:12px;font-weight:normal;color:#333;">1</div>
<div class="t" style="left:1207px;top:859.00px;font-size:12px;font-weight:normal;color:#333;letter-spacing:-0.1px">Pieces</div>
<div class="a" style="left:391px;top:874px;width:1004px;height:1px;background:#c8c8c8"></div>
<div class="a" style="left:1378px;top:418px;width:16px;height:456px;background:#f0f0f0"></div>
<div class="a" style="left:1378px;top:436px;width:16px;height:228px;background:#c2c2c2"></div>
<svg class="a" style="left:1382px;top:424px" width="9" height="6" viewBox="0 0 9 6"><path d="M0.8 5.2 L4.5 1.4 L8.2 5.2" fill="none" stroke="#606060" stroke-width="1.4"/></svg>
<svg class="a" style="left:1382px;top:862px" width="9" height="6" viewBox="0 0 9 6"><path d="M0.8 0.8 L4.5 4.6 L8.2 0.8" fill="none" stroke="#606060" stroke-width="1.4"/></svg>
<div class="a" style="left:1330px;top:900px;width:75px;height:22px;border:1px solid #7c8486;background:linear-gradient(#f0f0f0,#e4e4e4)"></div>
<div class="t" style="left:1217.5px;width:300px;text-align:center;top:906.00px;font-size:12px;font-weight:normal;color:#333;">OK</div>
</body></html>
